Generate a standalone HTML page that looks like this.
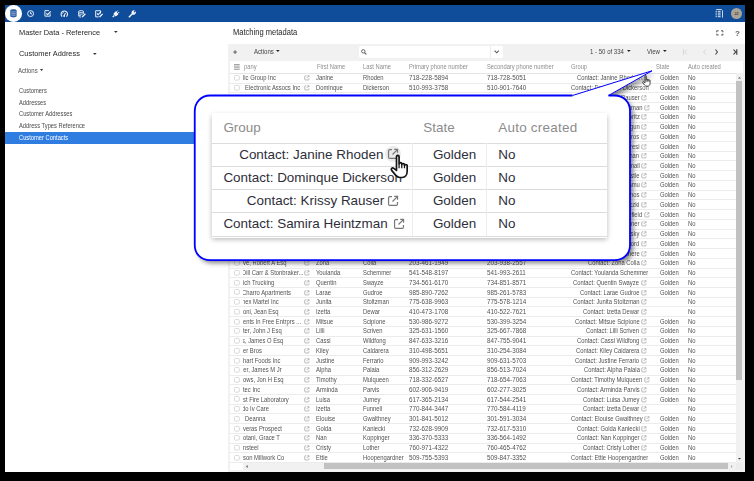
<!DOCTYPE html>
<html><head><meta charset="utf-8"><style>
*{margin:0;padding:0;box-sizing:border-box}
html,body{width:754px;height:481px;overflow:hidden;background:#000}
body{position:relative;font-family:"Liberation Sans",sans-serif;color:#333}
.abs{position:absolute}
.ic{position:absolute;overflow:visible}
.st{position:absolute;white-space:nowrap;line-height:1;transform-origin:0 0}
.clip{position:absolute;overflow:hidden}
.caret{position:absolute;width:0;height:0;border-style:solid;border-color:transparent;border-bottom-width:0}
.hl{position:absolute;left:230px;width:505.8px;height:1px;background:#ececec}
.cb{position:absolute;left:233.9px;width:5.5px;height:5.4px;border:0.8px solid #d9d9d9;border-radius:1.3px;background:#fff}
</style></head><body>
<div class="abs" style="left:5px;top:5px;width:739.8px;height:466.5px;background:#fff"></div>
<div class="abs" style="left:5px;top:5px;width:739.8px;height:16.6px;background:#0f4d9a"></div>
<div class="abs" style="left:5.2px;top:5.2px;width:16.6px;height:16.6px;border-radius:50%;background:#fff"></div>
<svg class="ic" style="left:10.2px;top:9.2px;width:6.9px;height:8.6px" viewBox="0 0 8 10"><path d="M0.3 1.8C0.3 0.6 2 0.2 4 0.2S7.7 0.6 7.7 1.8V8.2C7.7 9.4 6 9.8 4 9.8S0.3 9.4 0.3 8.2Z" fill="#3261a8"/><path d="M1.6 3.2C2.4 3.6 5.6 3.6 6.4 3.2M1.6 5.1C2.4 5.5 5.6 5.5 6.4 5.1M1.6 7C2.4 7.4 5.6 7.4 6.4 7" fill="none" stroke="#c9d6ea" stroke-width="0.7"/></svg>
<svg class="ic" style="left:27px;top:10px;width:7.2px;height:7.2px" viewBox="0 0 10 10"><circle cx="5" cy="5" r="4.1" fill="none" stroke="#f4f7fb" stroke-width="1.35"/><path d="M5 2.7V5.3H7.1" fill="none" stroke="#f4f7fb" stroke-width="1.3"/></svg>
<svg class="ic" style="left:44.1px;top:10.4px;width:7.4px;height:6.8px" viewBox="0 0 10 10"><path d="M8.6 5V9.1H0.9V0.9H6.8" fill="none" stroke="#f4f7fb" stroke-width="1.35"/><path d="M2.9 4.9L4.9 6.9L9.4 2" fill="none" stroke="#f4f7fb" stroke-width="1.5"/></svg>
<svg class="ic" style="left:60.2px;top:10.1px;width:8.6px;height:7.6px" viewBox="0 0 11 10"><path d="M2.6 8.6A4.2 4.2 0 1 1 8.4 8.6" fill="none" stroke="#f4f7fb" stroke-width="1.4"/><path d="M5.3 7.6L7.1 3.8" stroke="#f4f7fb" stroke-width="1.4"/><circle cx="5.3" cy="7.9" r="1.2" fill="#f4f7fb"/><path d="M3 5.2A2.6 2.6 0 0 1 5 2.8" fill="none" stroke="#f4f7fb" stroke-width="0.8"/></svg>
<svg class="ic" style="left:77.9px;top:10px;width:8.1px;height:7.6px" viewBox="0 0 11 10"><ellipse cx="4.2" cy="1.9" rx="3.3" ry="1.3" fill="none" stroke="#f4f7fb" stroke-width="1.1"/><path d="M0.9 1.9V8C0.9 9 2.3 9.5 4.2 9.5M7.5 1.9V4.6M0.9 4.1C0.9 5.1 2.3 5.5 4.2 5.5S7.5 5.1 7.5 4.1M0.9 6.3C0.9 7.2 2.3 7.6 4.2 7.6" fill="none" stroke="#f4f7fb" stroke-width="1.1"/><path d="M5.6 9.3L10 4.9" stroke="#f4f7fb" stroke-width="1.7"/></svg>
<svg class="ic" style="left:94.5px;top:10px;width:8.2px;height:7.6px" viewBox="0 0 11 10"><path d="M7.4 4.6V0.9H0.9V9.1H5" fill="none" stroke="#f4f7fb" stroke-width="1.25"/><path d="M2.5 4.5L4.2 6.2L8.2 1.9" fill="none" stroke="#f4f7fb" stroke-width="1.35"/><path d="M6.1 9.3L10.3 5.1" stroke="#f4f7fb" stroke-width="1.7"/></svg>
<svg class="ic" style="left:111.6px;top:9.8px;width:7.6px;height:7.8px" viewBox="0 0 10 10"><path d="M0.9 9.3L3 7.2" stroke="#f4f7fb" stroke-width="1.7"/><path d="M2 5.6C2 4.6 3 3.3 4 2.4L5.1 1.5L8.6 5L7.7 6.1C6.8 7.1 5.5 8.1 4.5 8.1Z" fill="#f4f7fb"/><path d="M5.8 2.4L7.6 0.6M7.7 4.3L9.5 2.5" stroke="#f4f7fb" stroke-width="1.3"/></svg>
<svg class="ic" style="left:128.3px;top:9.8px;width:8.3px;height:8px" viewBox="0 0 10 10"><path d="M0.9 9.1L5.9 4.1" stroke="#f4f7fb" stroke-width="1.8"/><path d="M4.7 4.7A2.8 2.8 0 0 1 8.4 0.7L6.8 2.3L7.6 3.3L9.3 1.6A2.8 2.8 0 0 1 5.5 5.5Z" fill="#f4f7fb"/></svg>
<svg class="ic" style="left:715.3px;top:8.9px;width:8px;height:9px" viewBox="0 0 8 9"><path d="M1.2 0.5H6.4L7.5 1.6V8.6" fill="none" stroke="#d9e3f1" stroke-width="0.9"/><path d="M0.6 2.3H1.8M2.8 2.3H5.6M0.6 4.1H1.8M2.8 4.1H5.6M0.6 5.9H1.8M2.8 5.9H5.6M0.6 7.7H1.8M2.8 7.7H5.6" stroke="#e6ecf6" stroke-width="1"/></svg>
<div class="abs" style="left:731.2px;top:8.4px;width:10.8px;height:10.8px;border-radius:50%;background:#aaa397"></div>
<div class="st" style="left:734.3px;top:12.1px;font-size:3.9px;color:#3a3a3a;font-weight:bold;letter-spacing:-0.1px">JJ</div>

<div class="st" style="left:18.60px;top:28.70px;font-size:8.05px;color:#262626;transform:scaleX(0.9200);">Master Data - Reference</div>
<svg class="ic" style="left:113.60px;top:31.40px;width:3.70px;height:2.00px" viewBox="0 0 3.70 2.00"><path d="M0 0L3.70 0L1.85 2.00Z" fill="#333"/></svg>
<div class="st" style="left:18.60px;top:49.70px;font-size:8.05px;color:#262626;transform:scaleX(0.9200);">Customer Address</div>
<svg class="ic" style="left:92.60px;top:52.60px;width:3.70px;height:2.00px" viewBox="0 0 3.70 2.00"><path d="M0 0L3.70 0L1.85 2.00Z" fill="#333"/></svg>
<div class="st" style="left:18.00px;top:67.60px;font-size:6.59px;color:#505050;transform:scaleX(0.9100);">Actions</div>
<svg class="ic" style="left:39.80px;top:69.10px;width:3.20px;height:2.00px" viewBox="0 0 3.20 2.00"><path d="M0 0L3.20 0L1.60 2.00Z" fill="#333"/></svg>
<div class="st" style="left:18.50px;top:87.70px;font-size:6.32px;color:#4a4a4a;transform:scaleX(0.9100);">Customers</div>
<div class="st" style="left:18.50px;top:99.50px;font-size:6.32px;color:#4a4a4a;transform:scaleX(0.9100);">Addresses</div>
<div class="st" style="left:18.50px;top:111.20px;font-size:6.32px;color:#4a4a4a;transform:scaleX(0.9100);">Customer Addresses</div>
<div class="st" style="left:18.50px;top:123.00px;font-size:6.32px;color:#4a4a4a;transform:scaleX(0.9100);">Address Types Reference</div>
<div class="abs" style="left:5px;top:132.1px;width:222px;height:11.7px;background:#2f7de1"></div>
<div class="st" style="left:18.50px;top:134.80px;font-size:6.32px;color:#fff;transform:scaleX(0.9100);">Customer Contacts</div>

<div class="st" style="left:233.00px;top:29.00px;font-size:8.21px;color:#262626;transform:scaleX(0.9200);">Matching metadata</div>
<svg class="ic" style="left:716.1px;top:29.9px;width:7.6px;height:5.8px" viewBox="0 0 10 7.6"><path d="M1 2.8V1.6C1 1.2 1.2 1 1.6 1H3.4M6.6 1H8.4C8.8 1 9 1.2 9 1.6V2.8M9 4.8V6C9 6.4 8.8 6.6 8.4 6.6H6.6M3.4 6.6H1.6C1.2 6.6 1 6.4 1 6V4.8" fill="none" stroke="#5a5a5a" stroke-width="1.5"/></svg>
<div class="st" style="left:734.9px;top:29.6px;font-size:7.8px;color:#5a5a5a;font-weight:bold">?</div>

<div class="abs" style="left:228px;top:43.5px;width:516.8px;height:428px;background:#f1f1f1"></div>
<svg class="ic" style="left:233.4px;top:49.8px;width:4.2px;height:4.2px" viewBox="0 0 4.2 4.2"><path d="M2.1 0.2V4M0.2 2.1H4" stroke="#555" stroke-width="0.9"/></svg>
<div class="st" style="left:253.80px;top:48.60px;font-size:6.65px;color:#444;transform:scaleX(0.9100);">Actions</div>
<svg class="ic" style="left:275.90px;top:50.40px;width:3.70px;height:2.10px" viewBox="0 0 3.70 2.10"><path d="M0 0L3.70 0L1.85 2.10Z" fill="#222"/></svg>
<div class="abs" style="left:358.5px;top:45.8px;width:144px;height:12.2px;background:#fff;border-radius:2px"></div>
<div class="abs" style="left:490.4px;top:45.8px;width:0.7px;height:12.2px;background:#ebebeb"></div>
<svg class="ic" style="left:361.4px;top:48.7px;width:5.8px;height:5.8px" viewBox="0 0 10 10"><circle cx="4" cy="4" r="2.9" fill="none" stroke="#555" stroke-width="1.5"/><path d="M6.1 6.1L9.2 9.2" stroke="#555" stroke-width="1.9"/></svg>
<svg class="ic" style="left:493.8px;top:50.2px;width:5.4px;height:3.4px" viewBox="0 0 10 6"><path d="M1 1L5 5L9 1" fill="none" stroke="#555" stroke-width="1.9"/></svg>
<div class="st" style="left:590.30px;top:48.60px;font-size:6.65px;color:#444;transform:scaleX(0.9100);">1 - 50 of 334</div>
<svg class="ic" style="left:626.90px;top:50.00px;width:3.70px;height:2.10px" viewBox="0 0 3.70 2.10"><path d="M0 0L3.70 0L1.85 2.10Z" fill="#222"/></svg>
<div class="st" style="left:647.40px;top:48.60px;font-size:6.65px;color:#444;transform:scaleX(0.9100);">View</div>
<svg class="ic" style="left:662.60px;top:50.00px;width:3.70px;height:2.10px" viewBox="0 0 3.70 2.10"><path d="M0 0L3.70 0L1.85 2.10Z" fill="#222"/></svg>
<svg class="ic" style="left:683.4px;top:48.7px;width:4.4px;height:6px" viewBox="0 0 4.4 6"><path d="M0.5 0.2V5.8M3.9 0.5L1.7 3L3.9 5.5" fill="none" stroke="#cfcfcf" stroke-width="0.8"/></svg>
<svg class="ic" style="left:703.3px;top:48.7px;width:3px;height:6px" viewBox="0 0 3 6"><path d="M2.6 0.5L0.6 3L2.6 5.5" fill="none" stroke="#cfcfcf" stroke-width="0.8"/></svg>
<svg class="ic" style="left:715.3px;top:48.7px;width:3px;height:6px" viewBox="0 0 3 6"><path d="M0.5 0.5L2.4 3L0.5 5.5" fill="none" stroke="#444" stroke-width="1.1"/></svg>
<svg class="ic" style="left:733.3px;top:48.7px;width:4.4px;height:6px" viewBox="0 0 4.4 6"><path d="M3.8 0.2V5.8M0.5 0.5L2.7 3L0.5 5.5" fill="none" stroke="#333" stroke-width="1.1"/></svg>

<div class="abs" style="left:230px;top:60.7px;width:512.6px;height:409.6px;background:#fff"></div>
<div class="abs" style="left:230px;top:72.9px;width:512.6px;height:1px;background:#e4e4e4"></div>
<svg class="ic" style="left:233.7px;top:63.9px;width:5.7px;height:5.8px" viewBox="0 0 6 6"><path d="M0 0.5H6M0 2.2H6M0 3.9H6M0 5.6H6" stroke="#8a8a8a" stroke-width="0.85"/></svg>
<div class="st" style="left:243.90px;top:64.00px;font-size:6.37px;color:#8e8e8e;transform:scaleX(0.9100);">pany</div>
<div class="st" style="left:316.50px;top:64.00px;font-size:6.37px;color:#8e8e8e;transform:scaleX(0.9100);">First Name</div>
<div class="st" style="left:363.30px;top:64.00px;font-size:6.37px;color:#8e8e8e;transform:scaleX(0.9100);">Last Name</div>
<div class="st" style="left:408.90px;top:64.00px;font-size:6.37px;color:#8e8e8e;transform:scaleX(0.9100);">Primary phone number</div>
<div class="st" style="left:486.60px;top:64.00px;font-size:6.37px;color:#8e8e8e;transform:scaleX(0.9100);">Secondary phone number</div>
<div class="st" style="left:571.30px;top:64.00px;font-size:6.37px;color:#8e8e8e;transform:scaleX(0.9100);">Group</div>
<div class="st" style="left:655.60px;top:64.00px;font-size:6.37px;color:#8e8e8e;transform:scaleX(0.9100);">State</div>
<div class="st" style="left:687.60px;top:64.00px;font-size:6.37px;color:#8e8e8e;transform:scaleX(0.9100);">Auto created</div>

<div class="hl" style="top:82.63px"></div>
<svg class="ic" style="left:233.8px;top:75.33px;width:5.8px;height:5.6px" viewBox="0 0 5.8 5.6"><rect x="0.45" y="0.45" width="4.9" height="4.7" rx="1.1" fill="#fff" stroke="#d6d6d6" stroke-width="0.9"/></svg>
<div class="clip" style="left:243px;top:73.43px;width:59.5px;height:9.7px"><div class="st" style="left:0.00px;top:2.00px;font-size:6.43px;color:#525252;transform:scaleX(0.9100);">lic Group Inc</div></div>
<svg class="ic" style="left:304.20px;top:75.43px;width:5.70px;height:5.70px" viewBox="0 0 10 10"><path d="M4.2 1.3H2.3C1.7 1.3 1.3 1.7 1.3 2.3V7.7C1.3 8.3 1.7 8.7 2.3 8.7H7.7C8.3 8.7 8.7 8.3 8.7 7.7V5.8" fill="none" stroke="#999" stroke-width="1.2"/><path d="M4.6 5.4L8.4 1.6M6 1.2H8.8V4" fill="none" stroke="#999" stroke-width="1.2"/></svg>
<div class="st" style="left:316.00px;top:75.43px;font-size:6.43px;color:#525252;transform:scaleX(0.9100);">Janine</div>
<div class="st" style="left:363.00px;top:75.43px;font-size:6.43px;color:#525252;transform:scaleX(0.9100);">Rhoden</div>
<div class="st" style="left:408.80px;top:75.43px;font-size:6.92px;color:#525252;transform:scaleX(0.9100);">718-228-5894</div>
<div class="st" style="left:486.70px;top:75.43px;font-size:6.92px;color:#525252;transform:scaleX(0.9100);">718-728-5051</div>
<div class="clip" style="left:571.3px;top:73.43px;width:79.2px;height:9.7px"><div class="st" style="left:5.40px;top:2.00px;font-size:6.43px;color:#525252;transform:scaleX(0.9100);">Contact: Janine Rhoden</div><svg class="ic" style="left:69.30px;top:2.00px;width:5.70px;height:5.70px" viewBox="0 0 10 10"><path d="M4.2 1.3H2.3C1.7 1.3 1.3 1.7 1.3 2.3V7.7C1.3 8.3 1.7 8.7 2.3 8.7H7.7C8.3 8.7 8.7 8.3 8.7 7.7V5.8" fill="none" stroke="#999" stroke-width="1.2"/><path d="M4.6 5.4L8.4 1.6M6 1.2H8.8V4" fill="none" stroke="#999" stroke-width="1.2"/></svg></div>
<div class="st" style="left:659.90px;top:75.43px;font-size:6.43px;color:#525252;transform:scaleX(0.9100);">Golden</div>
<div class="st" style="left:687.80px;top:75.43px;font-size:6.43px;color:#525252;transform:scaleX(0.9100);">No</div>
<div class="hl" style="top:92.36px"></div>
<svg class="ic" style="left:233.8px;top:85.06px;width:5.8px;height:5.6px" viewBox="0 0 5.8 5.6"><rect x="0.45" y="0.45" width="4.9" height="4.7" rx="1.1" fill="#fff" stroke="#d6d6d6" stroke-width="0.9"/></svg>
<div class="clip" style="left:243px;top:83.16px;width:59.5px;height:9.7px"><div class="st" style="left:1.90px;top:2.00px;font-size:6.43px;color:#525252;transform:scaleX(0.9100);">Electronic Assocs Inc</div></div>
<svg class="ic" style="left:304.20px;top:85.16px;width:5.70px;height:5.70px" viewBox="0 0 10 10"><path d="M4.2 1.3H2.3C1.7 1.3 1.3 1.7 1.3 2.3V7.7C1.3 8.3 1.7 8.7 2.3 8.7H7.7C8.3 8.7 8.7 8.3 8.7 7.7V5.8" fill="none" stroke="#999" stroke-width="1.2"/><path d="M4.6 5.4L8.4 1.6M6 1.2H8.8V4" fill="none" stroke="#999" stroke-width="1.2"/></svg>
<div class="st" style="left:316.00px;top:85.16px;font-size:6.43px;color:#525252;transform:scaleX(0.9100);">Dominque</div>
<div class="st" style="left:363.00px;top:85.16px;font-size:6.43px;color:#525252;transform:scaleX(0.9100);">Dickerson</div>
<div class="st" style="left:408.80px;top:85.16px;font-size:6.92px;color:#525252;transform:scaleX(0.9100);">510-993-3758</div>
<div class="st" style="left:486.70px;top:85.16px;font-size:6.92px;color:#525252;transform:scaleX(0.9100);">510-901-7640</div>
<div class="clip" style="left:571.3px;top:83.16px;width:79.2px;height:9.7px"><div class="st" style="left:0.00px;top:2.00px;font-size:6.43px;color:#525252;transform:scaleX(0.9100);">Contact: Dominque Dickerson</div><svg class="ic" style="left:78.83px;top:2.00px;width:5.70px;height:5.70px" viewBox="0 0 10 10"><path d="M4.2 1.3H2.3C1.7 1.3 1.3 1.7 1.3 2.3V7.7C1.3 8.3 1.7 8.7 2.3 8.7H7.7C8.3 8.7 8.7 8.3 8.7 7.7V5.8" fill="none" stroke="#999" stroke-width="1.2"/><path d="M4.6 5.4L8.4 1.6M6 1.2H8.8V4" fill="none" stroke="#999" stroke-width="1.2"/></svg></div>
<div class="st" style="left:659.90px;top:85.16px;font-size:6.43px;color:#525252;transform:scaleX(0.9100);">Golden</div>
<div class="st" style="left:687.80px;top:85.16px;font-size:6.43px;color:#525252;transform:scaleX(0.9100);">No</div>
<div class="hl" style="top:102.09px"></div>
<svg class="ic" style="left:233.8px;top:94.79px;width:5.8px;height:5.6px" viewBox="0 0 5.8 5.6"><rect x="0.45" y="0.45" width="4.9" height="4.7" rx="1.1" fill="#fff" stroke="#d6d6d6" stroke-width="0.9"/></svg>
<div class="clip" style="left:243px;top:92.89px;width:59.5px;height:9.7px"><div class="st" style="left:0.00px;top:2.00px;font-size:6.43px;color:#525252;transform:scaleX(0.9100);">Feltz Printing Service</div></div>
<svg class="ic" style="left:304.20px;top:94.89px;width:5.70px;height:5.70px" viewBox="0 0 10 10"><path d="M4.2 1.3H2.3C1.7 1.3 1.3 1.7 1.3 2.3V7.7C1.3 8.3 1.7 8.7 2.3 8.7H7.7C8.3 8.7 8.7 8.3 8.7 7.7V5.8" fill="none" stroke="#999" stroke-width="1.2"/><path d="M4.6 5.4L8.4 1.6M6 1.2H8.8V4" fill="none" stroke="#999" stroke-width="1.2"/></svg>
<div class="st" style="left:316.00px;top:94.89px;font-size:6.43px;color:#525252;transform:scaleX(0.9100);">Krissy</div>
<div class="st" style="left:363.00px;top:94.89px;font-size:6.43px;color:#525252;transform:scaleX(0.9100);">Rauser</div>
<div class="st" style="left:408.80px;top:94.89px;font-size:6.92px;color:#525252;transform:scaleX(0.9100);">555-111-2222</div>
<div class="st" style="left:486.70px;top:94.89px;font-size:6.92px;color:#525252;transform:scaleX(0.9100);">555-333-4444</div>
<div class="clip" style="left:571.3px;top:92.89px;width:79.2px;height:9.7px"><div class="st" style="left:8.34px;top:2.00px;font-size:6.43px;color:#525252;transform:scaleX(0.9100);">Contact: Krissy Rauser</div><svg class="ic" style="left:69.30px;top:2.00px;width:5.70px;height:5.70px" viewBox="0 0 10 10"><path d="M4.2 1.3H2.3C1.7 1.3 1.3 1.7 1.3 2.3V7.7C1.3 8.3 1.7 8.7 2.3 8.7H7.7C8.3 8.7 8.7 8.3 8.7 7.7V5.8" fill="none" stroke="#999" stroke-width="1.2"/><path d="M4.6 5.4L8.4 1.6M6 1.2H8.8V4" fill="none" stroke="#999" stroke-width="1.2"/></svg></div>
<div class="st" style="left:659.90px;top:94.89px;font-size:6.43px;color:#525252;transform:scaleX(0.9100);">Golden</div>
<div class="st" style="left:687.80px;top:94.89px;font-size:6.43px;color:#525252;transform:scaleX(0.9100);">No</div>
<div class="hl" style="top:111.82px"></div>
<svg class="ic" style="left:233.8px;top:104.52px;width:5.8px;height:5.6px" viewBox="0 0 5.8 5.6"><rect x="0.45" y="0.45" width="4.9" height="4.7" rx="1.1" fill="#fff" stroke="#d6d6d6" stroke-width="0.9"/></svg>
<div class="clip" style="left:243px;top:102.62px;width:59.5px;height:9.7px"><div class="st" style="left:0.00px;top:2.00px;font-size:6.43px;color:#525252;transform:scaleX(0.9100);">Morlong Associates</div></div>
<svg class="ic" style="left:304.20px;top:104.62px;width:5.70px;height:5.70px" viewBox="0 0 10 10"><path d="M4.2 1.3H2.3C1.7 1.3 1.3 1.7 1.3 2.3V7.7C1.3 8.3 1.7 8.7 2.3 8.7H7.7C8.3 8.7 8.7 8.3 8.7 7.7V5.8" fill="none" stroke="#999" stroke-width="1.2"/><path d="M4.6 5.4L8.4 1.6M6 1.2H8.8V4" fill="none" stroke="#999" stroke-width="1.2"/></svg>
<div class="st" style="left:316.00px;top:104.62px;font-size:6.43px;color:#525252;transform:scaleX(0.9100);">Samira</div>
<div class="st" style="left:363.00px;top:104.62px;font-size:6.43px;color:#525252;transform:scaleX(0.9100);">Heintzman</div>
<div class="st" style="left:408.80px;top:104.62px;font-size:6.92px;color:#525252;transform:scaleX(0.9100);">555-111-2222</div>
<div class="st" style="left:486.70px;top:104.62px;font-size:6.92px;color:#525252;transform:scaleX(0.9100);">555-333-4444</div>
<div class="clip" style="left:571.3px;top:102.62px;width:79.2px;height:9.7px"><div class="st" style="left:0.00px;top:2.00px;font-size:6.43px;color:#525252;transform:scaleX(0.9100);">Contact: Samira Heintzman</div><svg class="ic" style="left:72.66px;top:2.00px;width:5.70px;height:5.70px" viewBox="0 0 10 10"><path d="M4.2 1.3H2.3C1.7 1.3 1.3 1.7 1.3 2.3V7.7C1.3 8.3 1.7 8.7 2.3 8.7H7.7C8.3 8.7 8.7 8.3 8.7 7.7V5.8" fill="none" stroke="#999" stroke-width="1.2"/><path d="M4.6 5.4L8.4 1.6M6 1.2H8.8V4" fill="none" stroke="#999" stroke-width="1.2"/></svg></div>
<div class="st" style="left:659.90px;top:104.62px;font-size:6.43px;color:#525252;transform:scaleX(0.9100);">Golden</div>
<div class="st" style="left:687.80px;top:104.62px;font-size:6.43px;color:#525252;transform:scaleX(0.9100);">No</div>
<div class="hl" style="top:121.56px"></div>
<svg class="ic" style="left:233.8px;top:114.26px;width:5.8px;height:5.6px" viewBox="0 0 5.8 5.6"><rect x="0.45" y="0.45" width="4.9" height="4.7" rx="1.1" fill="#fff" stroke="#d6d6d6" stroke-width="0.9"/></svg>
<div class="clip" style="left:243px;top:112.36px;width:59.5px;height:9.7px"><div class="st" style="left:0.00px;top:2.00px;font-size:6.43px;color:#525252;transform:scaleX(0.9100);">Commercial Press</div></div>
<svg class="ic" style="left:304.20px;top:114.36px;width:5.70px;height:5.70px" viewBox="0 0 10 10"><path d="M4.2 1.3H2.3C1.7 1.3 1.3 1.7 1.3 2.3V7.7C1.3 8.3 1.7 8.7 2.3 8.7H7.7C8.3 8.7 8.7 8.3 8.7 7.7V5.8" fill="none" stroke="#999" stroke-width="1.2"/><path d="M4.6 5.4L8.4 1.6M6 1.2H8.8V4" fill="none" stroke="#999" stroke-width="1.2"/></svg>
<div class="st" style="left:316.00px;top:114.36px;font-size:6.43px;color:#525252;transform:scaleX(0.9100);">Lorrie</div>
<div class="st" style="left:363.00px;top:114.36px;font-size:6.43px;color:#525252;transform:scaleX(0.9100);">Moritz</div>
<div class="st" style="left:408.80px;top:114.36px;font-size:6.92px;color:#525252;transform:scaleX(0.9100);">555-111-2222</div>
<div class="st" style="left:486.70px;top:114.36px;font-size:6.92px;color:#525252;transform:scaleX(0.9100);">555-333-4444</div>
<div class="clip" style="left:571.3px;top:112.36px;width:79.2px;height:9.7px"><div class="st" style="left:12.23px;top:2.00px;font-size:6.43px;color:#525252;transform:scaleX(0.9100);">Contact: Lorrie Moritz</div><svg class="ic" style="left:69.30px;top:2.00px;width:5.70px;height:5.70px" viewBox="0 0 10 10"><path d="M4.2 1.3H2.3C1.7 1.3 1.3 1.7 1.3 2.3V7.7C1.3 8.3 1.7 8.7 2.3 8.7H7.7C8.3 8.7 8.7 8.3 8.7 7.7V5.8" fill="none" stroke="#999" stroke-width="1.2"/><path d="M4.6 5.4L8.4 1.6M6 1.2H8.8V4" fill="none" stroke="#999" stroke-width="1.2"/></svg></div>
<div class="st" style="left:659.90px;top:114.36px;font-size:6.43px;color:#525252;transform:scaleX(0.9100);">Golden</div>
<div class="st" style="left:687.80px;top:114.36px;font-size:6.43px;color:#525252;transform:scaleX(0.9100);">No</div>
<div class="hl" style="top:131.29px"></div>
<svg class="ic" style="left:233.8px;top:123.99px;width:5.8px;height:5.6px" viewBox="0 0 5.8 5.6"><rect x="0.45" y="0.45" width="4.9" height="4.7" rx="1.1" fill="#fff" stroke="#d6d6d6" stroke-width="0.9"/></svg>
<div class="clip" style="left:243px;top:122.09px;width:59.5px;height:9.7px"><div class="st" style="left:0.00px;top:2.00px;font-size:6.43px;color:#525252;transform:scaleX(0.9100);">Truhlar And Truhlar</div></div>
<svg class="ic" style="left:304.20px;top:124.09px;width:5.70px;height:5.70px" viewBox="0 0 10 10"><path d="M4.2 1.3H2.3C1.7 1.3 1.3 1.7 1.3 2.3V7.7C1.3 8.3 1.7 8.7 2.3 8.7H7.7C8.3 8.7 8.7 8.3 8.7 7.7V5.8" fill="none" stroke="#999" stroke-width="1.2"/><path d="M4.6 5.4L8.4 1.6M6 1.2H8.8V4" fill="none" stroke="#999" stroke-width="1.2"/></svg>
<div class="st" style="left:316.00px;top:124.09px;font-size:6.43px;color:#525252;transform:scaleX(0.9100);">Mattie</div>
<div class="st" style="left:363.00px;top:124.09px;font-size:6.43px;color:#525252;transform:scaleX(0.9100);">Bogun</div>
<div class="st" style="left:408.80px;top:124.09px;font-size:6.92px;color:#525252;transform:scaleX(0.9100);">555-111-2222</div>
<div class="st" style="left:486.70px;top:124.09px;font-size:6.92px;color:#525252;transform:scaleX(0.9100);">555-333-4444</div>
<div class="clip" style="left:571.3px;top:122.09px;width:79.2px;height:9.7px"><div class="st" style="left:10.27px;top:2.00px;font-size:6.43px;color:#525252;transform:scaleX(0.9100);">Contact: Mattie Bogun</div><svg class="ic" style="left:69.30px;top:2.00px;width:5.70px;height:5.70px" viewBox="0 0 10 10"><path d="M4.2 1.3H2.3C1.7 1.3 1.3 1.7 1.3 2.3V7.7C1.3 8.3 1.7 8.7 2.3 8.7H7.7C8.3 8.7 8.7 8.3 8.7 7.7V5.8" fill="none" stroke="#999" stroke-width="1.2"/><path d="M4.6 5.4L8.4 1.6M6 1.2H8.8V4" fill="none" stroke="#999" stroke-width="1.2"/></svg></div>
<div class="st" style="left:659.90px;top:124.09px;font-size:6.43px;color:#525252;transform:scaleX(0.9100);">Golden</div>
<div class="st" style="left:687.80px;top:124.09px;font-size:6.43px;color:#525252;transform:scaleX(0.9100);">No</div>
<div class="hl" style="top:141.02px"></div>
<svg class="ic" style="left:233.8px;top:133.72px;width:5.8px;height:5.6px" viewBox="0 0 5.8 5.6"><rect x="0.45" y="0.45" width="4.9" height="4.7" rx="1.1" fill="#fff" stroke="#d6d6d6" stroke-width="0.9"/></svg>
<div class="clip" style="left:243px;top:131.82px;width:59.5px;height:9.7px"><div class="st" style="left:0.00px;top:2.00px;font-size:6.43px;color:#525252;transform:scaleX(0.9100);">Chapman Ross</div></div>
<svg class="ic" style="left:304.20px;top:133.82px;width:5.70px;height:5.70px" viewBox="0 0 10 10"><path d="M4.2 1.3H2.3C1.7 1.3 1.3 1.7 1.3 2.3V7.7C1.3 8.3 1.7 8.7 2.3 8.7H7.7C8.3 8.7 8.7 8.3 8.7 7.7V5.8" fill="none" stroke="#999" stroke-width="1.2"/><path d="M4.6 5.4L8.4 1.6M6 1.2H8.8V4" fill="none" stroke="#999" stroke-width="1.2"/></svg>
<div class="st" style="left:316.00px;top:133.82px;font-size:6.43px;color:#525252;transform:scaleX(0.9100);">Gladys</div>
<div class="st" style="left:363.00px;top:133.82px;font-size:6.43px;color:#525252;transform:scaleX(0.9100);">Petros</div>
<div class="st" style="left:408.80px;top:133.82px;font-size:6.92px;color:#525252;transform:scaleX(0.9100);">555-111-2222</div>
<div class="st" style="left:486.70px;top:133.82px;font-size:6.92px;color:#525252;transform:scaleX(0.9100);">555-333-4444</div>
<div class="clip" style="left:571.3px;top:131.82px;width:79.2px;height:9.7px"><div class="st" style="left:8.00px;top:2.00px;font-size:6.43px;color:#525252;transform:scaleX(0.9100);">Contact: Gladys Petros</div><svg class="ic" style="left:69.30px;top:2.00px;width:5.70px;height:5.70px" viewBox="0 0 10 10"><path d="M4.2 1.3H2.3C1.7 1.3 1.3 1.7 1.3 2.3V7.7C1.3 8.3 1.7 8.7 2.3 8.7H7.7C8.3 8.7 8.7 8.3 8.7 7.7V5.8" fill="none" stroke="#999" stroke-width="1.2"/><path d="M4.6 5.4L8.4 1.6M6 1.2H8.8V4" fill="none" stroke="#999" stroke-width="1.2"/></svg></div>
<div class="st" style="left:659.90px;top:133.82px;font-size:6.43px;color:#525252;transform:scaleX(0.9100);">Golden</div>
<div class="st" style="left:687.80px;top:133.82px;font-size:6.43px;color:#525252;transform:scaleX(0.9100);">No</div>
<div class="hl" style="top:150.75px"></div>
<svg class="ic" style="left:233.8px;top:143.45px;width:5.8px;height:5.6px" viewBox="0 0 5.8 5.6"><rect x="0.45" y="0.45" width="4.9" height="4.7" rx="1.1" fill="#fff" stroke="#d6d6d6" stroke-width="0.9"/></svg>
<div class="clip" style="left:243px;top:141.55px;width:59.5px;height:9.7px"><div class="st" style="left:0.00px;top:2.00px;font-size:6.43px;color:#525252;transform:scaleX(0.9100);">Printing Dimensions</div></div>
<svg class="ic" style="left:304.20px;top:143.55px;width:5.70px;height:5.70px" viewBox="0 0 10 10"><path d="M4.2 1.3H2.3C1.7 1.3 1.3 1.7 1.3 2.3V7.7C1.3 8.3 1.7 8.7 2.3 8.7H7.7C8.3 8.7 8.7 8.3 8.7 7.7V5.8" fill="none" stroke="#999" stroke-width="1.2"/><path d="M4.6 5.4L8.4 1.6M6 1.2H8.8V4" fill="none" stroke="#999" stroke-width="1.2"/></svg>
<div class="st" style="left:316.00px;top:143.55px;font-size:6.43px;color:#525252;transform:scaleX(0.9100);">Yuki</div>
<div class="st" style="left:363.00px;top:143.55px;font-size:6.43px;color:#525252;transform:scaleX(0.9100);">Teresi</div>
<div class="st" style="left:408.80px;top:143.55px;font-size:6.92px;color:#525252;transform:scaleX(0.9100);">555-111-2222</div>
<div class="st" style="left:486.70px;top:143.55px;font-size:6.92px;color:#525252;transform:scaleX(0.9100);">555-333-4444</div>
<div class="clip" style="left:571.3px;top:141.55px;width:79.2px;height:9.7px"><div class="st" style="left:16.66px;top:2.00px;font-size:6.43px;color:#525252;transform:scaleX(0.9100);">Contact: Yuki Teresi</div><svg class="ic" style="left:69.30px;top:2.00px;width:5.70px;height:5.70px" viewBox="0 0 10 10"><path d="M4.2 1.3H2.3C1.7 1.3 1.3 1.7 1.3 2.3V7.7C1.3 8.3 1.7 8.7 2.3 8.7H7.7C8.3 8.7 8.7 8.3 8.7 7.7V5.8" fill="none" stroke="#999" stroke-width="1.2"/><path d="M4.6 5.4L8.4 1.6M6 1.2H8.8V4" fill="none" stroke="#999" stroke-width="1.2"/></svg></div>
<div class="st" style="left:659.90px;top:143.55px;font-size:6.43px;color:#525252;transform:scaleX(0.9100);">Golden</div>
<div class="st" style="left:687.80px;top:143.55px;font-size:6.43px;color:#525252;transform:scaleX(0.9100);">No</div>
<div class="hl" style="top:160.48px"></div>
<svg class="ic" style="left:233.8px;top:153.18px;width:5.8px;height:5.6px" viewBox="0 0 5.8 5.6"><rect x="0.45" y="0.45" width="4.9" height="4.7" rx="1.1" fill="#fff" stroke="#d6d6d6" stroke-width="0.9"/></svg>
<div class="clip" style="left:243px;top:151.28px;width:59.5px;height:9.7px"><div class="st" style="left:0.00px;top:2.00px;font-size:6.43px;color:#525252;transform:scaleX(0.9100);">Ruta Consulting</div></div>
<svg class="ic" style="left:304.20px;top:153.28px;width:5.70px;height:5.70px" viewBox="0 0 10 10"><path d="M4.2 1.3H2.3C1.7 1.3 1.3 1.7 1.3 2.3V7.7C1.3 8.3 1.7 8.7 2.3 8.7H7.7C8.3 8.7 8.7 8.3 8.7 7.7V5.8" fill="none" stroke="#999" stroke-width="1.2"/><path d="M4.6 5.4L8.4 1.6M6 1.2H8.8V4" fill="none" stroke="#999" stroke-width="1.2"/></svg>
<div class="st" style="left:316.00px;top:153.28px;font-size:6.43px;color:#525252;transform:scaleX(0.9100);">Chau</div>
<div class="st" style="left:363.00px;top:153.28px;font-size:6.43px;color:#525252;transform:scaleX(0.9100);">Kitzman</div>
<div class="st" style="left:408.80px;top:153.28px;font-size:6.92px;color:#525252;transform:scaleX(0.9100);">555-111-2222</div>
<div class="st" style="left:486.70px;top:153.28px;font-size:6.92px;color:#525252;transform:scaleX(0.9100);">555-333-4444</div>
<div class="clip" style="left:571.3px;top:151.28px;width:79.2px;height:9.7px"><div class="st" style="left:8.00px;top:2.00px;font-size:6.43px;color:#525252;transform:scaleX(0.9100);">Contact: Chau Kitzman</div><svg class="ic" style="left:69.30px;top:2.00px;width:5.70px;height:5.70px" viewBox="0 0 10 10"><path d="M4.2 1.3H2.3C1.7 1.3 1.3 1.7 1.3 2.3V7.7C1.3 8.3 1.7 8.7 2.3 8.7H7.7C8.3 8.7 8.7 8.3 8.7 7.7V5.8" fill="none" stroke="#999" stroke-width="1.2"/><path d="M4.6 5.4L8.4 1.6M6 1.2H8.8V4" fill="none" stroke="#999" stroke-width="1.2"/></svg></div>
<div class="st" style="left:659.90px;top:153.28px;font-size:6.43px;color:#525252;transform:scaleX(0.9100);">Golden</div>
<div class="st" style="left:687.80px;top:153.28px;font-size:6.43px;color:#525252;transform:scaleX(0.9100);">No</div>
<div class="hl" style="top:170.21px"></div>
<svg class="ic" style="left:233.8px;top:162.91px;width:5.8px;height:5.6px" viewBox="0 0 5.8 5.6"><rect x="0.45" y="0.45" width="4.9" height="4.7" rx="1.1" fill="#fff" stroke="#d6d6d6" stroke-width="0.9"/></svg>
<div class="clip" style="left:243px;top:161.01px;width:59.5px;height:9.7px"><div class="st" style="left:0.00px;top:2.00px;font-size:6.43px;color:#525252;transform:scaleX(0.9100);">Wild Flowers</div></div>
<svg class="ic" style="left:304.20px;top:163.01px;width:5.70px;height:5.70px" viewBox="0 0 10 10"><path d="M4.2 1.3H2.3C1.7 1.3 1.3 1.7 1.3 2.3V7.7C1.3 8.3 1.7 8.7 2.3 8.7H7.7C8.3 8.7 8.7 8.3 8.7 7.7V5.8" fill="none" stroke="#999" stroke-width="1.2"/><path d="M4.6 5.4L8.4 1.6M6 1.2H8.8V4" fill="none" stroke="#999" stroke-width="1.2"/></svg>
<div class="st" style="left:316.00px;top:163.01px;font-size:6.43px;color:#525252;transform:scaleX(0.9100);">Carmelina</div>
<div class="st" style="left:363.00px;top:163.01px;font-size:6.43px;color:#525252;transform:scaleX(0.9100);">Bonall</div>
<div class="st" style="left:408.80px;top:163.01px;font-size:6.92px;color:#525252;transform:scaleX(0.9100);">555-111-2222</div>
<div class="st" style="left:486.70px;top:163.01px;font-size:6.92px;color:#525252;transform:scaleX(0.9100);">555-333-4444</div>
<div class="clip" style="left:571.3px;top:161.01px;width:79.2px;height:9.7px"><div class="st" style="left:0.21px;top:2.00px;font-size:6.43px;color:#525252;transform:scaleX(0.9100);">Contact: Carmelina Bonall</div><svg class="ic" style="left:69.30px;top:2.00px;width:5.70px;height:5.70px" viewBox="0 0 10 10"><path d="M4.2 1.3H2.3C1.7 1.3 1.3 1.7 1.3 2.3V7.7C1.3 8.3 1.7 8.7 2.3 8.7H7.7C8.3 8.7 8.7 8.3 8.7 7.7V5.8" fill="none" stroke="#999" stroke-width="1.2"/><path d="M4.6 5.4L8.4 1.6M6 1.2H8.8V4" fill="none" stroke="#999" stroke-width="1.2"/></svg></div>
<div class="st" style="left:659.90px;top:163.01px;font-size:6.43px;color:#525252;transform:scaleX(0.9100);">Golden</div>
<div class="st" style="left:687.80px;top:163.01px;font-size:6.43px;color:#525252;transform:scaleX(0.9100);">No</div>
<div class="hl" style="top:179.94px"></div>
<svg class="ic" style="left:233.8px;top:172.64px;width:5.8px;height:5.6px" viewBox="0 0 5.8 5.6"><rect x="0.45" y="0.45" width="4.9" height="4.7" rx="1.1" fill="#fff" stroke="#d6d6d6" stroke-width="0.9"/></svg>
<div class="clip" style="left:243px;top:170.74px;width:59.5px;height:9.7px"><div class="st" style="left:0.00px;top:2.00px;font-size:6.43px;color:#525252;transform:scaleX(0.9100);">Cedar Ridge</div></div>
<svg class="ic" style="left:304.20px;top:172.74px;width:5.70px;height:5.70px" viewBox="0 0 10 10"><path d="M4.2 1.3H2.3C1.7 1.3 1.3 1.7 1.3 2.3V7.7C1.3 8.3 1.7 8.7 2.3 8.7H7.7C8.3 8.7 8.7 8.3 8.7 7.7V5.8" fill="none" stroke="#999" stroke-width="1.2"/><path d="M4.6 5.4L8.4 1.6M6 1.2H8.8V4" fill="none" stroke="#999" stroke-width="1.2"/></svg>
<div class="st" style="left:316.00px;top:172.74px;font-size:6.43px;color:#525252;transform:scaleX(0.9100);">Lorrie</div>
<div class="st" style="left:363.00px;top:172.74px;font-size:6.43px;color:#525252;transform:scaleX(0.9100);">Nestle</div>
<div class="st" style="left:408.80px;top:172.74px;font-size:6.92px;color:#525252;transform:scaleX(0.9100);">555-111-2222</div>
<div class="st" style="left:486.70px;top:172.74px;font-size:6.92px;color:#525252;transform:scaleX(0.9100);">555-333-4444</div>
<div class="clip" style="left:571.3px;top:170.74px;width:79.2px;height:9.7px"><div class="st" style="left:11.58px;top:2.00px;font-size:6.43px;color:#525252;transform:scaleX(0.9100);">Contact: Lorrie Nestle</div><svg class="ic" style="left:69.30px;top:2.00px;width:5.70px;height:5.70px" viewBox="0 0 10 10"><path d="M4.2 1.3H2.3C1.7 1.3 1.3 1.7 1.3 2.3V7.7C1.3 8.3 1.7 8.7 2.3 8.7H7.7C8.3 8.7 8.7 8.3 8.7 7.7V5.8" fill="none" stroke="#999" stroke-width="1.2"/><path d="M4.6 5.4L8.4 1.6M6 1.2H8.8V4" fill="none" stroke="#999" stroke-width="1.2"/></svg></div>
<div class="st" style="left:659.90px;top:172.74px;font-size:6.43px;color:#525252;transform:scaleX(0.9100);">Golden</div>
<div class="st" style="left:687.80px;top:172.74px;font-size:6.43px;color:#525252;transform:scaleX(0.9100);">No</div>
<div class="hl" style="top:189.67px"></div>
<svg class="ic" style="left:233.8px;top:182.37px;width:5.8px;height:5.6px" viewBox="0 0 5.8 5.6"><rect x="0.45" y="0.45" width="4.9" height="4.7" rx="1.1" fill="#fff" stroke="#d6d6d6" stroke-width="0.9"/></svg>
<div class="clip" style="left:243px;top:180.47px;width:59.5px;height:9.7px"><div class="st" style="left:0.00px;top:2.00px;font-size:6.43px;color:#525252;transform:scaleX(0.9100);">Lake Park</div></div>
<svg class="ic" style="left:304.20px;top:182.47px;width:5.70px;height:5.70px" viewBox="0 0 10 10"><path d="M4.2 1.3H2.3C1.7 1.3 1.3 1.7 1.3 2.3V7.7C1.3 8.3 1.7 8.7 2.3 8.7H7.7C8.3 8.7 8.7 8.3 8.7 7.7V5.8" fill="none" stroke="#999" stroke-width="1.2"/><path d="M4.6 5.4L8.4 1.6M6 1.2H8.8V4" fill="none" stroke="#999" stroke-width="1.2"/></svg>
<div class="st" style="left:316.00px;top:182.47px;font-size:6.43px;color:#525252;transform:scaleX(0.9100);">Estrella</div>
<div class="st" style="left:363.00px;top:182.47px;font-size:6.43px;color:#525252;transform:scaleX(0.9100);">Samu</div>
<div class="st" style="left:408.80px;top:182.47px;font-size:6.92px;color:#525252;transform:scaleX(0.9100);">555-111-2222</div>
<div class="st" style="left:486.70px;top:182.47px;font-size:6.92px;color:#525252;transform:scaleX(0.9100);">555-333-4444</div>
<div class="clip" style="left:571.3px;top:180.47px;width:79.2px;height:9.7px"><div class="st" style="left:8.32px;top:2.00px;font-size:6.43px;color:#525252;transform:scaleX(0.9100);">Contact: Estrella Samu</div><svg class="ic" style="left:69.30px;top:2.00px;width:5.70px;height:5.70px" viewBox="0 0 10 10"><path d="M4.2 1.3H2.3C1.7 1.3 1.3 1.7 1.3 2.3V7.7C1.3 8.3 1.7 8.7 2.3 8.7H7.7C8.3 8.7 8.7 8.3 8.7 7.7V5.8" fill="none" stroke="#999" stroke-width="1.2"/><path d="M4.6 5.4L8.4 1.6M6 1.2H8.8V4" fill="none" stroke="#999" stroke-width="1.2"/></svg></div>
<div class="st" style="left:659.90px;top:182.47px;font-size:6.43px;color:#525252;transform:scaleX(0.9100);">Golden</div>
<div class="st" style="left:687.80px;top:182.47px;font-size:6.43px;color:#525252;transform:scaleX(0.9100);">No</div>
<div class="hl" style="top:199.40px"></div>
<svg class="ic" style="left:233.8px;top:192.10px;width:5.8px;height:5.6px" viewBox="0 0 5.8 5.6"><rect x="0.45" y="0.45" width="4.9" height="4.7" rx="1.1" fill="#fff" stroke="#d6d6d6" stroke-width="0.9"/></svg>
<div class="clip" style="left:243px;top:190.20px;width:59.5px;height:9.7px"><div class="st" style="left:0.00px;top:2.00px;font-size:6.43px;color:#525252;transform:scaleX(0.9100);">Acme Inc</div></div>
<svg class="ic" style="left:304.20px;top:192.20px;width:5.70px;height:5.70px" viewBox="0 0 10 10"><path d="M4.2 1.3H2.3C1.7 1.3 1.3 1.7 1.3 2.3V7.7C1.3 8.3 1.7 8.7 2.3 8.7H7.7C8.3 8.7 8.7 8.3 8.7 7.7V5.8" fill="none" stroke="#999" stroke-width="1.2"/><path d="M4.6 5.4L8.4 1.6M6 1.2H8.8V4" fill="none" stroke="#999" stroke-width="1.2"/></svg>
<div class="st" style="left:316.00px;top:192.20px;font-size:6.43px;color:#525252;transform:scaleX(0.9100);">Ryan</div>
<div class="st" style="left:363.00px;top:192.20px;font-size:6.43px;color:#525252;transform:scaleX(0.9100);">Harnos</div>
<div class="st" style="left:408.80px;top:192.20px;font-size:6.92px;color:#525252;transform:scaleX(0.9100);">555-111-2222</div>
<div class="st" style="left:486.70px;top:192.20px;font-size:6.92px;color:#525252;transform:scaleX(0.9100);">555-333-4444</div>
<div class="clip" style="left:571.3px;top:190.20px;width:79.2px;height:9.7px"><div class="st" style="left:10.60px;top:2.00px;font-size:6.43px;color:#525252;transform:scaleX(0.9100);">Contact: Ryan Harnos</div><svg class="ic" style="left:69.30px;top:2.00px;width:5.70px;height:5.70px" viewBox="0 0 10 10"><path d="M4.2 1.3H2.3C1.7 1.3 1.3 1.7 1.3 2.3V7.7C1.3 8.3 1.7 8.7 2.3 8.7H7.7C8.3 8.7 8.7 8.3 8.7 7.7V5.8" fill="none" stroke="#999" stroke-width="1.2"/><path d="M4.6 5.4L8.4 1.6M6 1.2H8.8V4" fill="none" stroke="#999" stroke-width="1.2"/></svg></div>
<div class="st" style="left:659.90px;top:192.20px;font-size:6.43px;color:#525252;transform:scaleX(0.9100);">Golden</div>
<div class="st" style="left:687.80px;top:192.20px;font-size:6.43px;color:#525252;transform:scaleX(0.9100);">No</div>
<div class="hl" style="top:209.13px"></div>
<svg class="ic" style="left:233.8px;top:201.83px;width:5.8px;height:5.6px" viewBox="0 0 5.8 5.6"><rect x="0.45" y="0.45" width="4.9" height="4.7" rx="1.1" fill="#fff" stroke="#d6d6d6" stroke-width="0.9"/></svg>
<div class="clip" style="left:243px;top:199.93px;width:59.5px;height:9.7px"><div class="st" style="left:0.00px;top:2.00px;font-size:6.43px;color:#525252;transform:scaleX(0.9100);">Smith Co</div></div>
<svg class="ic" style="left:304.20px;top:201.93px;width:5.70px;height:5.70px" viewBox="0 0 10 10"><path d="M4.2 1.3H2.3C1.7 1.3 1.3 1.7 1.3 2.3V7.7C1.3 8.3 1.7 8.7 2.3 8.7H7.7C8.3 8.7 8.7 8.3 8.7 7.7V5.8" fill="none" stroke="#999" stroke-width="1.2"/><path d="M4.6 5.4L8.4 1.6M6 1.2H8.8V4" fill="none" stroke="#999" stroke-width="1.2"/></svg>
<div class="st" style="left:316.00px;top:201.93px;font-size:6.43px;color:#525252;transform:scaleX(0.9100);">Yolando</div>
<div class="st" style="left:363.00px;top:201.93px;font-size:6.43px;color:#525252;transform:scaleX(0.9100);">Luczki</div>
<div class="st" style="left:408.80px;top:201.93px;font-size:6.92px;color:#525252;transform:scaleX(0.9100);">555-111-2222</div>
<div class="st" style="left:486.70px;top:201.93px;font-size:6.92px;color:#525252;transform:scaleX(0.9100);">555-333-4444</div>
<div class="clip" style="left:571.3px;top:199.93px;width:79.2px;height:9.7px"><div class="st" style="left:5.71px;top:2.00px;font-size:6.43px;color:#525252;transform:scaleX(0.9100);">Contact: Yolando Luczki</div><svg class="ic" style="left:69.30px;top:2.00px;width:5.70px;height:5.70px" viewBox="0 0 10 10"><path d="M4.2 1.3H2.3C1.7 1.3 1.3 1.7 1.3 2.3V7.7C1.3 8.3 1.7 8.7 2.3 8.7H7.7C8.3 8.7 8.7 8.3 8.7 7.7V5.8" fill="none" stroke="#999" stroke-width="1.2"/><path d="M4.6 5.4L8.4 1.6M6 1.2H8.8V4" fill="none" stroke="#999" stroke-width="1.2"/></svg></div>
<div class="st" style="left:659.90px;top:201.93px;font-size:6.43px;color:#525252;transform:scaleX(0.9100);">Golden</div>
<div class="st" style="left:687.80px;top:201.93px;font-size:6.43px;color:#525252;transform:scaleX(0.9100);">No</div>
<div class="hl" style="top:218.87px"></div>
<svg class="ic" style="left:233.8px;top:211.56px;width:5.8px;height:5.6px" viewBox="0 0 5.8 5.6"><rect x="0.45" y="0.45" width="4.9" height="4.7" rx="1.1" fill="#fff" stroke="#d6d6d6" stroke-width="0.9"/></svg>
<div class="clip" style="left:243px;top:209.67px;width:59.5px;height:9.7px"><div class="st" style="left:0.00px;top:2.00px;font-size:6.43px;color:#525252;transform:scaleX(0.9100);">Barfield Inc</div></div>
<svg class="ic" style="left:304.20px;top:211.67px;width:5.70px;height:5.70px" viewBox="0 0 10 10"><path d="M4.2 1.3H2.3C1.7 1.3 1.3 1.7 1.3 2.3V7.7C1.3 8.3 1.7 8.7 2.3 8.7H7.7C8.3 8.7 8.7 8.3 8.7 7.7V5.8" fill="none" stroke="#999" stroke-width="1.2"/><path d="M4.6 5.4L8.4 1.6M6 1.2H8.8V4" fill="none" stroke="#999" stroke-width="1.2"/></svg>
<div class="st" style="left:316.00px;top:211.67px;font-size:6.43px;color:#525252;transform:scaleX(0.9100);">Stephaine</div>
<div class="st" style="left:363.00px;top:211.67px;font-size:6.43px;color:#525252;transform:scaleX(0.9100);">Barfield</div>
<div class="st" style="left:408.80px;top:211.67px;font-size:6.92px;color:#525252;transform:scaleX(0.9100);">555-111-2222</div>
<div class="st" style="left:486.70px;top:211.67px;font-size:6.92px;color:#525252;transform:scaleX(0.9100);">555-333-4444</div>
<div class="clip" style="left:571.3px;top:209.67px;width:79.2px;height:9.7px"><div class="st" style="left:0.00px;top:2.00px;font-size:6.43px;color:#525252;transform:scaleX(0.9100);">Contact: Stephaine Barfield</div><svg class="ic" style="left:72.35px;top:2.00px;width:5.70px;height:5.70px" viewBox="0 0 10 10"><path d="M4.2 1.3H2.3C1.7 1.3 1.3 1.7 1.3 2.3V7.7C1.3 8.3 1.7 8.7 2.3 8.7H7.7C8.3 8.7 8.7 8.3 8.7 7.7V5.8" fill="none" stroke="#999" stroke-width="1.2"/><path d="M4.6 5.4L8.4 1.6M6 1.2H8.8V4" fill="none" stroke="#999" stroke-width="1.2"/></svg></div>
<div class="st" style="left:659.90px;top:211.67px;font-size:6.43px;color:#525252;transform:scaleX(0.9100);">Golden</div>
<div class="st" style="left:687.80px;top:211.67px;font-size:6.43px;color:#525252;transform:scaleX(0.9100);">No</div>
<div class="hl" style="top:228.60px"></div>
<svg class="ic" style="left:233.8px;top:221.30px;width:5.8px;height:5.6px" viewBox="0 0 5.8 5.6"><rect x="0.45" y="0.45" width="4.9" height="4.7" rx="1.1" fill="#fff" stroke="#d6d6d6" stroke-width="0.9"/></svg>
<div class="clip" style="left:243px;top:219.40px;width:59.5px;height:9.7px"><div class="st" style="left:0.00px;top:2.00px;font-size:6.43px;color:#525252;transform:scaleX(0.9100);">Wenner Co</div></div>
<svg class="ic" style="left:304.20px;top:221.40px;width:5.70px;height:5.70px" viewBox="0 0 10 10"><path d="M4.2 1.3H2.3C1.7 1.3 1.3 1.7 1.3 2.3V7.7C1.3 8.3 1.7 8.7 2.3 8.7H7.7C8.3 8.7 8.7 8.3 8.7 7.7V5.8" fill="none" stroke="#999" stroke-width="1.2"/><path d="M4.6 5.4L8.4 1.6M6 1.2H8.8V4" fill="none" stroke="#999" stroke-width="1.2"/></svg>
<div class="st" style="left:316.00px;top:221.40px;font-size:6.43px;color:#525252;transform:scaleX(0.9100);">Tonette</div>
<div class="st" style="left:363.00px;top:221.40px;font-size:6.43px;color:#525252;transform:scaleX(0.9100);">Wenner</div>
<div class="st" style="left:408.80px;top:221.40px;font-size:6.92px;color:#525252;transform:scaleX(0.9100);">555-111-2222</div>
<div class="st" style="left:486.70px;top:221.40px;font-size:6.92px;color:#525252;transform:scaleX(0.9100);">555-333-4444</div>
<div class="clip" style="left:571.3px;top:219.40px;width:79.2px;height:9.7px"><div class="st" style="left:3.66px;top:2.00px;font-size:6.43px;color:#525252;transform:scaleX(0.9100);">Contact: Tonette Wenner</div><svg class="ic" style="left:69.30px;top:2.00px;width:5.70px;height:5.70px" viewBox="0 0 10 10"><path d="M4.2 1.3H2.3C1.7 1.3 1.3 1.7 1.3 2.3V7.7C1.3 8.3 1.7 8.7 2.3 8.7H7.7C8.3 8.7 8.7 8.3 8.7 7.7V5.8" fill="none" stroke="#999" stroke-width="1.2"/><path d="M4.6 5.4L8.4 1.6M6 1.2H8.8V4" fill="none" stroke="#999" stroke-width="1.2"/></svg></div>
<div class="st" style="left:659.90px;top:221.40px;font-size:6.43px;color:#525252;transform:scaleX(0.9100);">Golden</div>
<div class="st" style="left:687.80px;top:221.40px;font-size:6.43px;color:#525252;transform:scaleX(0.9100);">No</div>
<div class="hl" style="top:238.33px"></div>
<svg class="ic" style="left:233.8px;top:231.03px;width:5.8px;height:5.6px" viewBox="0 0 5.8 5.6"><rect x="0.45" y="0.45" width="4.9" height="4.7" rx="1.1" fill="#fff" stroke="#d6d6d6" stroke-width="0.9"/></svg>
<div class="clip" style="left:243px;top:229.13px;width:59.5px;height:9.7px"><div class="st" style="left:0.00px;top:2.00px;font-size:6.43px;color:#525252;transform:scaleX(0.9100);">Skursky Inc</div></div>
<svg class="ic" style="left:304.20px;top:231.13px;width:5.70px;height:5.70px" viewBox="0 0 10 10"><path d="M4.2 1.3H2.3C1.7 1.3 1.3 1.7 1.3 2.3V7.7C1.3 8.3 1.7 8.7 2.3 8.7H7.7C8.3 8.7 8.7 8.3 8.7 7.7V5.8" fill="none" stroke="#999" stroke-width="1.2"/><path d="M4.6 5.4L8.4 1.6M6 1.2H8.8V4" fill="none" stroke="#999" stroke-width="1.2"/></svg>
<div class="st" style="left:316.00px;top:231.13px;font-size:6.43px;color:#525252;transform:scaleX(0.9100);">Benton</div>
<div class="st" style="left:363.00px;top:231.13px;font-size:6.43px;color:#525252;transform:scaleX(0.9100);">Skursky</div>
<div class="st" style="left:408.80px;top:231.13px;font-size:6.92px;color:#525252;transform:scaleX(0.9100);">555-111-2222</div>
<div class="st" style="left:486.70px;top:231.13px;font-size:6.92px;color:#525252;transform:scaleX(0.9100);">555-333-4444</div>
<div class="clip" style="left:571.3px;top:229.13px;width:79.2px;height:9.7px"><div class="st" style="left:3.77px;top:2.00px;font-size:6.43px;color:#525252;transform:scaleX(0.9100);">Contact: Benton Skursky</div><svg class="ic" style="left:69.30px;top:2.00px;width:5.70px;height:5.70px" viewBox="0 0 10 10"><path d="M4.2 1.3H2.3C1.7 1.3 1.3 1.7 1.3 2.3V7.7C1.3 8.3 1.7 8.7 2.3 8.7H7.7C8.3 8.7 8.7 8.3 8.7 7.7V5.8" fill="none" stroke="#999" stroke-width="1.2"/><path d="M4.6 5.4L8.4 1.6M6 1.2H8.8V4" fill="none" stroke="#999" stroke-width="1.2"/></svg></div>
<div class="st" style="left:659.90px;top:231.13px;font-size:6.43px;color:#525252;transform:scaleX(0.9100);">Golden</div>
<div class="st" style="left:687.80px;top:231.13px;font-size:6.43px;color:#525252;transform:scaleX(0.9100);">No</div>
<div class="hl" style="top:248.06px"></div>
<svg class="ic" style="left:233.8px;top:240.76px;width:5.8px;height:5.6px" viewBox="0 0 5.8 5.6"><rect x="0.45" y="0.45" width="4.9" height="4.7" rx="1.1" fill="#fff" stroke="#d6d6d6" stroke-width="0.9"/></svg>
<div class="clip" style="left:243px;top:238.86px;width:59.5px;height:9.7px"><div class="st" style="left:0.00px;top:2.00px;font-size:6.43px;color:#525252;transform:scaleX(0.9100);">Boord Co</div></div>
<svg class="ic" style="left:304.20px;top:240.86px;width:5.70px;height:5.70px" viewBox="0 0 10 10"><path d="M4.2 1.3H2.3C1.7 1.3 1.3 1.7 1.3 2.3V7.7C1.3 8.3 1.7 8.7 2.3 8.7H7.7C8.3 8.7 8.7 8.3 8.7 7.7V5.8" fill="none" stroke="#999" stroke-width="1.2"/><path d="M4.6 5.4L8.4 1.6M6 1.2H8.8V4" fill="none" stroke="#999" stroke-width="1.2"/></svg>
<div class="st" style="left:316.00px;top:240.86px;font-size:6.43px;color:#525252;transform:scaleX(0.9100);">Annabelle</div>
<div class="st" style="left:363.00px;top:240.86px;font-size:6.43px;color:#525252;transform:scaleX(0.9100);">Boord</div>
<div class="st" style="left:408.80px;top:240.86px;font-size:6.92px;color:#525252;transform:scaleX(0.9100);">555-111-2222</div>
<div class="st" style="left:486.70px;top:240.86px;font-size:6.92px;color:#525252;transform:scaleX(0.9100);">555-333-4444</div>
<div class="clip" style="left:571.3px;top:238.86px;width:79.2px;height:9.7px"><div class="st" style="left:1.81px;top:2.00px;font-size:6.43px;color:#525252;transform:scaleX(0.9100);">Contact: Annabelle Boord</div><svg class="ic" style="left:69.30px;top:2.00px;width:5.70px;height:5.70px" viewBox="0 0 10 10"><path d="M4.2 1.3H2.3C1.7 1.3 1.3 1.7 1.3 2.3V7.7C1.3 8.3 1.7 8.7 2.3 8.7H7.7C8.3 8.7 8.7 8.3 8.7 7.7V5.8" fill="none" stroke="#999" stroke-width="1.2"/><path d="M4.6 5.4L8.4 1.6M6 1.2H8.8V4" fill="none" stroke="#999" stroke-width="1.2"/></svg></div>
<div class="st" style="left:659.90px;top:240.86px;font-size:6.43px;color:#525252;transform:scaleX(0.9100);">Golden</div>
<div class="st" style="left:687.80px;top:240.86px;font-size:6.43px;color:#525252;transform:scaleX(0.9100);">No</div>
<div class="hl" style="top:257.79px"></div>
<svg class="ic" style="left:233.8px;top:250.49px;width:5.8px;height:5.6px" viewBox="0 0 5.8 5.6"><rect x="0.45" y="0.45" width="4.9" height="4.7" rx="1.1" fill="#fff" stroke="#d6d6d6" stroke-width="0.9"/></svg>
<div class="clip" style="left:243px;top:248.59px;width:59.5px;height:9.7px"><div class="st" style="left:0.00px;top:2.00px;font-size:6.43px;color:#525252;transform:scaleX(0.9100);">Venere Inc</div></div>
<svg class="ic" style="left:304.20px;top:250.59px;width:5.70px;height:5.70px" viewBox="0 0 10 10"><path d="M4.2 1.3H2.3C1.7 1.3 1.3 1.7 1.3 2.3V7.7C1.3 8.3 1.7 8.7 2.3 8.7H7.7C8.3 8.7 8.7 8.3 8.7 7.7V5.8" fill="none" stroke="#999" stroke-width="1.2"/><path d="M4.6 5.4L8.4 1.6M6 1.2H8.8V4" fill="none" stroke="#999" stroke-width="1.2"/></svg>
<div class="st" style="left:316.00px;top:250.59px;font-size:6.43px;color:#525252;transform:scaleX(0.9100);">Art</div>
<div class="st" style="left:363.00px;top:250.59px;font-size:6.43px;color:#525252;transform:scaleX(0.9100);">Venere</div>
<div class="st" style="left:408.80px;top:250.59px;font-size:6.92px;color:#525252;transform:scaleX(0.9100);">555-111-2222</div>
<div class="st" style="left:486.70px;top:250.59px;font-size:6.92px;color:#525252;transform:scaleX(0.9100);">555-333-4444</div>
<div class="clip" style="left:571.3px;top:248.59px;width:79.2px;height:9.7px"><div class="st" style="left:17.41px;top:2.00px;font-size:6.43px;color:#525252;transform:scaleX(0.9100);">Contact: Art Venere</div><svg class="ic" style="left:69.30px;top:2.00px;width:5.70px;height:5.70px" viewBox="0 0 10 10"><path d="M4.2 1.3H2.3C1.7 1.3 1.3 1.7 1.3 2.3V7.7C1.3 8.3 1.7 8.7 2.3 8.7H7.7C8.3 8.7 8.7 8.3 8.7 7.7V5.8" fill="none" stroke="#999" stroke-width="1.2"/><path d="M4.6 5.4L8.4 1.6M6 1.2H8.8V4" fill="none" stroke="#999" stroke-width="1.2"/></svg></div>
<div class="st" style="left:659.90px;top:250.59px;font-size:6.43px;color:#525252;transform:scaleX(0.9100);">Golden</div>
<div class="st" style="left:687.80px;top:250.59px;font-size:6.43px;color:#525252;transform:scaleX(0.9100);">No</div>
<div class="hl" style="top:267.52px"></div>
<svg class="ic" style="left:233.8px;top:260.22px;width:5.8px;height:5.6px" viewBox="0 0 5.8 5.6"><rect x="0.45" y="0.45" width="4.9" height="4.7" rx="1.1" fill="#fff" stroke="#d6d6d6" stroke-width="0.9"/></svg>
<div class="clip" style="left:243px;top:258.32px;width:59.5px;height:9.7px"><div class="st" style="left:0.00px;top:2.00px;font-size:6.43px;color:#525252;transform:scaleX(0.9100);">ve, Robert A Esq</div></div>
<svg class="ic" style="left:304.20px;top:260.32px;width:5.70px;height:5.70px" viewBox="0 0 10 10"><path d="M4.2 1.3H2.3C1.7 1.3 1.3 1.7 1.3 2.3V7.7C1.3 8.3 1.7 8.7 2.3 8.7H7.7C8.3 8.7 8.7 8.3 8.7 7.7V5.8" fill="none" stroke="#999" stroke-width="1.2"/><path d="M4.6 5.4L8.4 1.6M6 1.2H8.8V4" fill="none" stroke="#999" stroke-width="1.2"/></svg>
<div class="st" style="left:316.00px;top:260.32px;font-size:6.43px;color:#525252;transform:scaleX(0.9100);">Zona</div>
<div class="st" style="left:363.00px;top:260.32px;font-size:6.43px;color:#525252;transform:scaleX(0.9100);">Colla</div>
<div class="st" style="left:408.80px;top:260.32px;font-size:6.92px;color:#525252;transform:scaleX(0.9100);">203-461-1949</div>
<div class="st" style="left:486.70px;top:260.32px;font-size:6.92px;color:#525252;transform:scaleX(0.9100);">203-938-2557</div>
<div class="clip" style="left:571.3px;top:258.32px;width:79.2px;height:9.7px"><div class="st" style="left:16.44px;top:2.00px;font-size:6.43px;color:#525252;transform:scaleX(0.9100);">Contact: Zona Colla</div><svg class="ic" style="left:69.30px;top:2.00px;width:5.70px;height:5.70px" viewBox="0 0 10 10"><path d="M4.2 1.3H2.3C1.7 1.3 1.3 1.7 1.3 2.3V7.7C1.3 8.3 1.7 8.7 2.3 8.7H7.7C8.3 8.7 8.7 8.3 8.7 7.7V5.8" fill="none" stroke="#999" stroke-width="1.2"/><path d="M4.6 5.4L8.4 1.6M6 1.2H8.8V4" fill="none" stroke="#999" stroke-width="1.2"/></svg></div>
<div class="st" style="left:659.90px;top:260.32px;font-size:6.43px;color:#525252;transform:scaleX(0.9100);">Golden</div>
<div class="st" style="left:687.80px;top:260.32px;font-size:6.43px;color:#525252;transform:scaleX(0.9100);">No</div>
<div class="hl" style="top:277.25px"></div>
<svg class="ic" style="left:233.8px;top:269.95px;width:5.8px;height:5.6px" viewBox="0 0 5.8 5.6"><rect x="0.45" y="0.45" width="4.9" height="4.7" rx="1.1" fill="#fff" stroke="#d6d6d6" stroke-width="0.9"/></svg>
<div class="clip" style="left:243px;top:268.05px;width:59.5px;height:9.7px"><div class="st" style="left:-1.40px;top:2.00px;font-size:6.43px;color:#525252;transform:scaleX(0.9100);">Dill Carr & Stonbraker...</div></div>
<svg class="ic" style="left:304.20px;top:270.05px;width:5.70px;height:5.70px" viewBox="0 0 10 10"><path d="M4.2 1.3H2.3C1.7 1.3 1.3 1.7 1.3 2.3V7.7C1.3 8.3 1.7 8.7 2.3 8.7H7.7C8.3 8.7 8.7 8.3 8.7 7.7V5.8" fill="none" stroke="#999" stroke-width="1.2"/><path d="M4.6 5.4L8.4 1.6M6 1.2H8.8V4" fill="none" stroke="#999" stroke-width="1.2"/></svg>
<div class="st" style="left:316.00px;top:270.05px;font-size:6.43px;color:#525252;transform:scaleX(0.9100);">Youlanda</div>
<div class="st" style="left:363.00px;top:270.05px;font-size:6.43px;color:#525252;transform:scaleX(0.9100);">Schemmer</div>
<div class="st" style="left:408.80px;top:270.05px;font-size:6.92px;color:#525252;transform:scaleX(0.9100);">541-548-8197</div>
<div class="st" style="left:486.70px;top:270.05px;font-size:6.92px;color:#525252;transform:scaleX(0.9100);">541-993-2611</div>
<div class="clip" style="left:571.3px;top:268.05px;width:79.2px;height:9.7px"><div class="st" style="left:0.00px;top:2.00px;font-size:6.43px;color:#525252;transform:scaleX(0.9100);">Contact: Youlanda Schemmer</div><svg class="ic" style="left:78.52px;top:2.00px;width:5.70px;height:5.70px" viewBox="0 0 10 10"><path d="M4.2 1.3H2.3C1.7 1.3 1.3 1.7 1.3 2.3V7.7C1.3 8.3 1.7 8.7 2.3 8.7H7.7C8.3 8.7 8.7 8.3 8.7 7.7V5.8" fill="none" stroke="#999" stroke-width="1.2"/><path d="M4.6 5.4L8.4 1.6M6 1.2H8.8V4" fill="none" stroke="#999" stroke-width="1.2"/></svg></div>
<div class="st" style="left:659.90px;top:270.05px;font-size:6.43px;color:#525252;transform:scaleX(0.9100);">Golden</div>
<div class="st" style="left:687.80px;top:270.05px;font-size:6.43px;color:#525252;transform:scaleX(0.9100);">No</div>
<div class="hl" style="top:286.98px"></div>
<svg class="ic" style="left:233.8px;top:279.68px;width:5.8px;height:5.6px" viewBox="0 0 5.8 5.6"><rect x="0.45" y="0.45" width="4.9" height="4.7" rx="1.1" fill="#fff" stroke="#d6d6d6" stroke-width="0.9"/></svg>
<div class="clip" style="left:243px;top:277.78px;width:59.5px;height:9.7px"><div class="st" style="left:0.00px;top:2.00px;font-size:6.43px;color:#525252;transform:scaleX(0.9100);">ich Trucking</div></div>
<svg class="ic" style="left:304.20px;top:279.78px;width:5.70px;height:5.70px" viewBox="0 0 10 10"><path d="M4.2 1.3H2.3C1.7 1.3 1.3 1.7 1.3 2.3V7.7C1.3 8.3 1.7 8.7 2.3 8.7H7.7C8.3 8.7 8.7 8.3 8.7 7.7V5.8" fill="none" stroke="#999" stroke-width="1.2"/><path d="M4.6 5.4L8.4 1.6M6 1.2H8.8V4" fill="none" stroke="#999" stroke-width="1.2"/></svg>
<div class="st" style="left:316.00px;top:279.78px;font-size:6.43px;color:#525252;transform:scaleX(0.9100);">Quentin</div>
<div class="st" style="left:363.00px;top:279.78px;font-size:6.43px;color:#525252;transform:scaleX(0.9100);">Swayze</div>
<div class="st" style="left:408.80px;top:279.78px;font-size:6.92px;color:#525252;transform:scaleX(0.9100);">734-561-6170</div>
<div class="st" style="left:486.70px;top:279.78px;font-size:6.92px;color:#525252;transform:scaleX(0.9100);">734-851-8571</div>
<div class="clip" style="left:571.3px;top:277.78px;width:79.2px;height:9.7px"><div class="st" style="left:2.15px;top:2.00px;font-size:6.43px;color:#525252;transform:scaleX(0.9100);">Contact: Quentin Swayze</div><svg class="ic" style="left:69.30px;top:2.00px;width:5.70px;height:5.70px" viewBox="0 0 10 10"><path d="M4.2 1.3H2.3C1.7 1.3 1.3 1.7 1.3 2.3V7.7C1.3 8.3 1.7 8.7 2.3 8.7H7.7C8.3 8.7 8.7 8.3 8.7 7.7V5.8" fill="none" stroke="#999" stroke-width="1.2"/><path d="M4.6 5.4L8.4 1.6M6 1.2H8.8V4" fill="none" stroke="#999" stroke-width="1.2"/></svg></div>
<div class="st" style="left:659.90px;top:279.78px;font-size:6.43px;color:#525252;transform:scaleX(0.9100);">Golden</div>
<div class="st" style="left:687.80px;top:279.78px;font-size:6.43px;color:#525252;transform:scaleX(0.9100);">No</div>
<div class="hl" style="top:296.71px"></div>
<svg class="ic" style="left:233.8px;top:289.41px;width:5.8px;height:5.6px" viewBox="0 0 5.8 5.6"><rect x="0.45" y="0.45" width="4.9" height="4.7" rx="1.1" fill="#fff" stroke="#d6d6d6" stroke-width="0.9"/></svg>
<div class="clip" style="left:243px;top:287.51px;width:59.5px;height:9.7px"><div class="st" style="left:-1.20px;top:2.00px;font-size:6.43px;color:#525252;transform:scaleX(0.9100);">Charro Apartments</div></div>
<svg class="ic" style="left:304.20px;top:289.51px;width:5.70px;height:5.70px" viewBox="0 0 10 10"><path d="M4.2 1.3H2.3C1.7 1.3 1.3 1.7 1.3 2.3V7.7C1.3 8.3 1.7 8.7 2.3 8.7H7.7C8.3 8.7 8.7 8.3 8.7 7.7V5.8" fill="none" stroke="#999" stroke-width="1.2"/><path d="M4.6 5.4L8.4 1.6M6 1.2H8.8V4" fill="none" stroke="#999" stroke-width="1.2"/></svg>
<div class="st" style="left:316.00px;top:289.51px;font-size:6.43px;color:#525252;transform:scaleX(0.9100);">Larae</div>
<div class="st" style="left:363.00px;top:289.51px;font-size:6.43px;color:#525252;transform:scaleX(0.9100);">Gudroe</div>
<div class="st" style="left:408.80px;top:289.51px;font-size:6.92px;color:#525252;transform:scaleX(0.9100);">985-890-7262</div>
<div class="st" style="left:486.70px;top:289.51px;font-size:6.92px;color:#525252;transform:scaleX(0.9100);">985-261-5783</div>
<div class="clip" style="left:571.3px;top:287.51px;width:79.2px;height:9.7px"><div class="st" style="left:8.64px;top:2.00px;font-size:6.43px;color:#525252;transform:scaleX(0.9100);">Contact: Larae Gudroe</div><svg class="ic" style="left:69.30px;top:2.00px;width:5.70px;height:5.70px" viewBox="0 0 10 10"><path d="M4.2 1.3H2.3C1.7 1.3 1.3 1.7 1.3 2.3V7.7C1.3 8.3 1.7 8.7 2.3 8.7H7.7C8.3 8.7 8.7 8.3 8.7 7.7V5.8" fill="none" stroke="#999" stroke-width="1.2"/><path d="M4.6 5.4L8.4 1.6M6 1.2H8.8V4" fill="none" stroke="#999" stroke-width="1.2"/></svg></div>
<div class="st" style="left:659.90px;top:289.51px;font-size:6.43px;color:#525252;transform:scaleX(0.9100);">Golden</div>
<div class="st" style="left:687.80px;top:289.51px;font-size:6.43px;color:#525252;transform:scaleX(0.9100);">No</div>
<div class="hl" style="top:306.44px"></div>
<svg class="ic" style="left:233.8px;top:299.14px;width:5.8px;height:5.6px" viewBox="0 0 5.8 5.6"><rect x="0.45" y="0.45" width="4.9" height="4.7" rx="1.1" fill="#fff" stroke="#d6d6d6" stroke-width="0.9"/></svg>
<div class="clip" style="left:243px;top:297.24px;width:59.5px;height:9.7px"><div class="st" style="left:-1.00px;top:2.00px;font-size:6.43px;color:#525252;transform:scaleX(0.9100);">nex Martel Inc</div></div>
<svg class="ic" style="left:304.20px;top:299.24px;width:5.70px;height:5.70px" viewBox="0 0 10 10"><path d="M4.2 1.3H2.3C1.7 1.3 1.3 1.7 1.3 2.3V7.7C1.3 8.3 1.7 8.7 2.3 8.7H7.7C8.3 8.7 8.7 8.3 8.7 7.7V5.8" fill="none" stroke="#999" stroke-width="1.2"/><path d="M4.6 5.4L8.4 1.6M6 1.2H8.8V4" fill="none" stroke="#999" stroke-width="1.2"/></svg>
<div class="st" style="left:316.00px;top:299.24px;font-size:6.43px;color:#525252;transform:scaleX(0.9100);">Junita</div>
<div class="st" style="left:363.00px;top:299.24px;font-size:6.43px;color:#525252;transform:scaleX(0.9100);">Stoltzman</div>
<div class="st" style="left:408.80px;top:299.24px;font-size:6.92px;color:#525252;transform:scaleX(0.9100);">775-638-9963</div>
<div class="st" style="left:486.70px;top:299.24px;font-size:6.92px;color:#525252;transform:scaleX(0.9100);">775-578-1214</div>
<div class="clip" style="left:571.3px;top:297.24px;width:79.2px;height:9.7px"><div class="st" style="left:1.50px;top:2.00px;font-size:6.43px;color:#525252;transform:scaleX(0.9100);">Contact: Junita Stoltzman</div><svg class="ic" style="left:69.30px;top:2.00px;width:5.70px;height:5.70px" viewBox="0 0 10 10"><path d="M4.2 1.3H2.3C1.7 1.3 1.3 1.7 1.3 2.3V7.7C1.3 8.3 1.7 8.7 2.3 8.7H7.7C8.3 8.7 8.7 8.3 8.7 7.7V5.8" fill="none" stroke="#999" stroke-width="1.2"/><path d="M4.6 5.4L8.4 1.6M6 1.2H8.8V4" fill="none" stroke="#999" stroke-width="1.2"/></svg></div>
<div class="st" style="left:687.80px;top:299.24px;font-size:6.43px;color:#525252;transform:scaleX(0.9100);">No</div>
<div class="hl" style="top:316.18px"></div>
<svg class="ic" style="left:233.8px;top:308.88px;width:5.8px;height:5.6px" viewBox="0 0 5.8 5.6"><rect x="0.45" y="0.45" width="4.9" height="4.7" rx="1.1" fill="#fff" stroke="#d6d6d6" stroke-width="0.9"/></svg>
<div class="clip" style="left:243px;top:306.98px;width:59.5px;height:9.7px"><div class="st" style="left:0.00px;top:2.00px;font-size:6.43px;color:#525252;transform:scaleX(0.9100);">oni, Jean Esq</div></div>
<svg class="ic" style="left:304.20px;top:308.98px;width:5.70px;height:5.70px" viewBox="0 0 10 10"><path d="M4.2 1.3H2.3C1.7 1.3 1.3 1.7 1.3 2.3V7.7C1.3 8.3 1.7 8.7 2.3 8.7H7.7C8.3 8.7 8.7 8.3 8.7 7.7V5.8" fill="none" stroke="#999" stroke-width="1.2"/><path d="M4.6 5.4L8.4 1.6M6 1.2H8.8V4" fill="none" stroke="#999" stroke-width="1.2"/></svg>
<div class="st" style="left:316.00px;top:308.98px;font-size:6.43px;color:#525252;transform:scaleX(0.9100);">Izetta</div>
<div class="st" style="left:363.00px;top:308.98px;font-size:6.43px;color:#525252;transform:scaleX(0.9100);">Dewar</div>
<div class="st" style="left:408.80px;top:308.98px;font-size:6.92px;color:#525252;transform:scaleX(0.9100);">410-473-1708</div>
<div class="st" style="left:486.70px;top:308.98px;font-size:6.92px;color:#525252;transform:scaleX(0.9100);">410-522-7621</div>
<div class="clip" style="left:571.3px;top:306.98px;width:79.2px;height:9.7px"><div class="st" style="left:11.91px;top:2.00px;font-size:6.43px;color:#525252;transform:scaleX(0.9100);">Contact: Izetta Dewar</div><svg class="ic" style="left:69.30px;top:2.00px;width:5.70px;height:5.70px" viewBox="0 0 10 10"><path d="M4.2 1.3H2.3C1.7 1.3 1.3 1.7 1.3 2.3V7.7C1.3 8.3 1.7 8.7 2.3 8.7H7.7C8.3 8.7 8.7 8.3 8.7 7.7V5.8" fill="none" stroke="#999" stroke-width="1.2"/><path d="M4.6 5.4L8.4 1.6M6 1.2H8.8V4" fill="none" stroke="#999" stroke-width="1.2"/></svg></div>
<div class="st" style="left:687.80px;top:308.98px;font-size:6.43px;color:#525252;transform:scaleX(0.9100);">No</div>
<div class="hl" style="top:325.91px"></div>
<svg class="ic" style="left:233.8px;top:318.61px;width:5.8px;height:5.6px" viewBox="0 0 5.8 5.6"><rect x="0.45" y="0.45" width="4.9" height="4.7" rx="1.1" fill="#fff" stroke="#d6d6d6" stroke-width="0.9"/></svg>
<div class="clip" style="left:243px;top:316.71px;width:59.5px;height:9.7px"><div class="st" style="left:0.00px;top:2.00px;font-size:6.43px;color:#525252;transform:scaleX(0.9100);">ents In Free Entrprs ...</div></div>
<svg class="ic" style="left:304.20px;top:318.71px;width:5.70px;height:5.70px" viewBox="0 0 10 10"><path d="M4.2 1.3H2.3C1.7 1.3 1.3 1.7 1.3 2.3V7.7C1.3 8.3 1.7 8.7 2.3 8.7H7.7C8.3 8.7 8.7 8.3 8.7 7.7V5.8" fill="none" stroke="#999" stroke-width="1.2"/><path d="M4.6 5.4L8.4 1.6M6 1.2H8.8V4" fill="none" stroke="#999" stroke-width="1.2"/></svg>
<div class="st" style="left:316.00px;top:318.71px;font-size:6.43px;color:#525252;transform:scaleX(0.9100);">Mitsue</div>
<div class="st" style="left:363.00px;top:318.71px;font-size:6.43px;color:#525252;transform:scaleX(0.9100);">Scipione</div>
<div class="st" style="left:408.80px;top:318.71px;font-size:6.92px;color:#525252;transform:scaleX(0.9100);">530-986-9272</div>
<div class="st" style="left:486.70px;top:318.71px;font-size:6.92px;color:#525252;transform:scaleX(0.9100);">530-399-3254</div>
<div class="clip" style="left:571.3px;top:316.71px;width:79.2px;height:9.7px"><div class="st" style="left:3.45px;top:2.00px;font-size:6.43px;color:#525252;transform:scaleX(0.9100);">Contact: Mitsue Scipione</div><svg class="ic" style="left:69.30px;top:2.00px;width:5.70px;height:5.70px" viewBox="0 0 10 10"><path d="M4.2 1.3H2.3C1.7 1.3 1.3 1.7 1.3 2.3V7.7C1.3 8.3 1.7 8.7 2.3 8.7H7.7C8.3 8.7 8.7 8.3 8.7 7.7V5.8" fill="none" stroke="#999" stroke-width="1.2"/><path d="M4.6 5.4L8.4 1.6M6 1.2H8.8V4" fill="none" stroke="#999" stroke-width="1.2"/></svg></div>
<div class="st" style="left:659.90px;top:318.71px;font-size:6.43px;color:#525252;transform:scaleX(0.9100);">Golden</div>
<div class="st" style="left:687.80px;top:318.71px;font-size:6.43px;color:#525252;transform:scaleX(0.9100);">No</div>
<div class="hl" style="top:335.64px"></div>
<svg class="ic" style="left:233.8px;top:328.34px;width:5.8px;height:5.6px" viewBox="0 0 5.8 5.6"><rect x="0.45" y="0.45" width="4.9" height="4.7" rx="1.1" fill="#fff" stroke="#d6d6d6" stroke-width="0.9"/></svg>
<div class="clip" style="left:243px;top:326.44px;width:59.5px;height:9.7px"><div class="st" style="left:0.00px;top:2.00px;font-size:6.43px;color:#525252;transform:scaleX(0.9100);">ter, John J Esq</div></div>
<svg class="ic" style="left:304.20px;top:328.44px;width:5.70px;height:5.70px" viewBox="0 0 10 10"><path d="M4.2 1.3H2.3C1.7 1.3 1.3 1.7 1.3 2.3V7.7C1.3 8.3 1.7 8.7 2.3 8.7H7.7C8.3 8.7 8.7 8.3 8.7 7.7V5.8" fill="none" stroke="#999" stroke-width="1.2"/><path d="M4.6 5.4L8.4 1.6M6 1.2H8.8V4" fill="none" stroke="#999" stroke-width="1.2"/></svg>
<div class="st" style="left:316.00px;top:328.44px;font-size:6.43px;color:#525252;transform:scaleX(0.9100);">Lilli</div>
<div class="st" style="left:363.00px;top:328.44px;font-size:6.43px;color:#525252;transform:scaleX(0.9100);">Scriven</div>
<div class="st" style="left:408.80px;top:328.44px;font-size:6.92px;color:#525252;transform:scaleX(0.9100);">325-631-1560</div>
<div class="st" style="left:486.70px;top:328.44px;font-size:6.92px;color:#525252;transform:scaleX(0.9100);">325-667-7868</div>
<div class="clip" style="left:571.3px;top:326.44px;width:79.2px;height:9.7px"><div class="st" style="left:15.15px;top:2.00px;font-size:6.43px;color:#525252;transform:scaleX(0.9100);">Contact: Lilli Scriven</div><svg class="ic" style="left:69.30px;top:2.00px;width:5.70px;height:5.70px" viewBox="0 0 10 10"><path d="M4.2 1.3H2.3C1.7 1.3 1.3 1.7 1.3 2.3V7.7C1.3 8.3 1.7 8.7 2.3 8.7H7.7C8.3 8.7 8.7 8.3 8.7 7.7V5.8" fill="none" stroke="#999" stroke-width="1.2"/><path d="M4.6 5.4L8.4 1.6M6 1.2H8.8V4" fill="none" stroke="#999" stroke-width="1.2"/></svg></div>
<div class="st" style="left:659.90px;top:328.44px;font-size:6.43px;color:#525252;transform:scaleX(0.9100);">Golden</div>
<div class="st" style="left:687.80px;top:328.44px;font-size:6.43px;color:#525252;transform:scaleX(0.9100);">No</div>
<div class="hl" style="top:345.37px"></div>
<svg class="ic" style="left:233.8px;top:338.07px;width:5.8px;height:5.6px" viewBox="0 0 5.8 5.6"><rect x="0.45" y="0.45" width="4.9" height="4.7" rx="1.1" fill="#fff" stroke="#d6d6d6" stroke-width="0.9"/></svg>
<div class="clip" style="left:243px;top:336.17px;width:59.5px;height:9.7px"><div class="st" style="left:-1.00px;top:2.00px;font-size:6.43px;color:#525252;transform:scaleX(0.9100);">s, James O Esq</div></div>
<svg class="ic" style="left:304.20px;top:338.17px;width:5.70px;height:5.70px" viewBox="0 0 10 10"><path d="M4.2 1.3H2.3C1.7 1.3 1.3 1.7 1.3 2.3V7.7C1.3 8.3 1.7 8.7 2.3 8.7H7.7C8.3 8.7 8.7 8.3 8.7 7.7V5.8" fill="none" stroke="#999" stroke-width="1.2"/><path d="M4.6 5.4L8.4 1.6M6 1.2H8.8V4" fill="none" stroke="#999" stroke-width="1.2"/></svg>
<div class="st" style="left:316.00px;top:338.17px;font-size:6.43px;color:#525252;transform:scaleX(0.9100);">Cassi</div>
<div class="st" style="left:363.00px;top:338.17px;font-size:6.43px;color:#525252;transform:scaleX(0.9100);">Wildfong</div>
<div class="st" style="left:408.80px;top:338.17px;font-size:6.92px;color:#525252;transform:scaleX(0.9100);">847-633-3216</div>
<div class="st" style="left:486.70px;top:338.17px;font-size:6.92px;color:#525252;transform:scaleX(0.9100);">847-755-9041</div>
<div class="clip" style="left:571.3px;top:336.17px;width:79.2px;height:9.7px"><div class="st" style="left:5.74px;top:2.00px;font-size:6.43px;color:#525252;transform:scaleX(0.9100);">Contact: Cassi Wildfong</div><svg class="ic" style="left:69.30px;top:2.00px;width:5.70px;height:5.70px" viewBox="0 0 10 10"><path d="M4.2 1.3H2.3C1.7 1.3 1.3 1.7 1.3 2.3V7.7C1.3 8.3 1.7 8.7 2.3 8.7H7.7C8.3 8.7 8.7 8.3 8.7 7.7V5.8" fill="none" stroke="#999" stroke-width="1.2"/><path d="M4.6 5.4L8.4 1.6M6 1.2H8.8V4" fill="none" stroke="#999" stroke-width="1.2"/></svg></div>
<div class="st" style="left:659.90px;top:338.17px;font-size:6.43px;color:#525252;transform:scaleX(0.9100);">Golden</div>
<div class="st" style="left:687.80px;top:338.17px;font-size:6.43px;color:#525252;transform:scaleX(0.9100);">No</div>
<div class="hl" style="top:355.10px"></div>
<svg class="ic" style="left:233.8px;top:347.80px;width:5.8px;height:5.6px" viewBox="0 0 5.8 5.6"><rect x="0.45" y="0.45" width="4.9" height="4.7" rx="1.1" fill="#fff" stroke="#d6d6d6" stroke-width="0.9"/></svg>
<div class="clip" style="left:243px;top:345.90px;width:59.5px;height:9.7px"><div class="st" style="left:0.00px;top:2.00px;font-size:6.43px;color:#525252;transform:scaleX(0.9100);">er Bros</div></div>
<svg class="ic" style="left:304.20px;top:347.90px;width:5.70px;height:5.70px" viewBox="0 0 10 10"><path d="M4.2 1.3H2.3C1.7 1.3 1.3 1.7 1.3 2.3V7.7C1.3 8.3 1.7 8.7 2.3 8.7H7.7C8.3 8.7 8.7 8.3 8.7 7.7V5.8" fill="none" stroke="#999" stroke-width="1.2"/><path d="M4.6 5.4L8.4 1.6M6 1.2H8.8V4" fill="none" stroke="#999" stroke-width="1.2"/></svg>
<div class="st" style="left:316.00px;top:347.90px;font-size:6.43px;color:#525252;transform:scaleX(0.9100);">Kiley</div>
<div class="st" style="left:363.00px;top:347.90px;font-size:6.43px;color:#525252;transform:scaleX(0.9100);">Caldarera</div>
<div class="st" style="left:408.80px;top:347.90px;font-size:6.92px;color:#525252;transform:scaleX(0.9100);">310-498-5651</div>
<div class="st" style="left:486.70px;top:347.90px;font-size:6.92px;color:#525252;transform:scaleX(0.9100);">310-254-3084</div>
<div class="clip" style="left:571.3px;top:345.90px;width:79.2px;height:9.7px"><div class="st" style="left:4.76px;top:2.00px;font-size:6.43px;color:#525252;transform:scaleX(0.9100);">Contact: Kiley Caldarera</div><svg class="ic" style="left:69.30px;top:2.00px;width:5.70px;height:5.70px" viewBox="0 0 10 10"><path d="M4.2 1.3H2.3C1.7 1.3 1.3 1.7 1.3 2.3V7.7C1.3 8.3 1.7 8.7 2.3 8.7H7.7C8.3 8.7 8.7 8.3 8.7 7.7V5.8" fill="none" stroke="#999" stroke-width="1.2"/><path d="M4.6 5.4L8.4 1.6M6 1.2H8.8V4" fill="none" stroke="#999" stroke-width="1.2"/></svg></div>
<div class="st" style="left:659.90px;top:347.90px;font-size:6.43px;color:#525252;transform:scaleX(0.9100);">Golden</div>
<div class="st" style="left:687.80px;top:347.90px;font-size:6.43px;color:#525252;transform:scaleX(0.9100);">No</div>
<div class="hl" style="top:364.83px"></div>
<svg class="ic" style="left:233.8px;top:357.53px;width:5.8px;height:5.6px" viewBox="0 0 5.8 5.6"><rect x="0.45" y="0.45" width="4.9" height="4.7" rx="1.1" fill="#fff" stroke="#d6d6d6" stroke-width="0.9"/></svg>
<div class="clip" style="left:243px;top:355.63px;width:59.5px;height:9.7px"><div class="st" style="left:0.00px;top:2.00px;font-size:6.43px;color:#525252;transform:scaleX(0.9100);">hart Foods Inc</div></div>
<svg class="ic" style="left:304.20px;top:357.63px;width:5.70px;height:5.70px" viewBox="0 0 10 10"><path d="M4.2 1.3H2.3C1.7 1.3 1.3 1.7 1.3 2.3V7.7C1.3 8.3 1.7 8.7 2.3 8.7H7.7C8.3 8.7 8.7 8.3 8.7 7.7V5.8" fill="none" stroke="#999" stroke-width="1.2"/><path d="M4.6 5.4L8.4 1.6M6 1.2H8.8V4" fill="none" stroke="#999" stroke-width="1.2"/></svg>
<div class="st" style="left:316.00px;top:357.63px;font-size:6.43px;color:#525252;transform:scaleX(0.9100);">Justine</div>
<div class="st" style="left:363.00px;top:357.63px;font-size:6.43px;color:#525252;transform:scaleX(0.9100);">Ferrario</div>
<div class="st" style="left:408.80px;top:357.63px;font-size:6.92px;color:#525252;transform:scaleX(0.9100);">909-993-3242</div>
<div class="st" style="left:486.70px;top:357.63px;font-size:6.92px;color:#525252;transform:scaleX(0.9100);">909-631-5703</div>
<div class="clip" style="left:571.3px;top:355.63px;width:79.2px;height:9.7px"><div class="st" style="left:4.12px;top:2.00px;font-size:6.43px;color:#525252;transform:scaleX(0.9100);">Contact: Justine Ferrario</div><svg class="ic" style="left:69.30px;top:2.00px;width:5.70px;height:5.70px" viewBox="0 0 10 10"><path d="M4.2 1.3H2.3C1.7 1.3 1.3 1.7 1.3 2.3V7.7C1.3 8.3 1.7 8.7 2.3 8.7H7.7C8.3 8.7 8.7 8.3 8.7 7.7V5.8" fill="none" stroke="#999" stroke-width="1.2"/><path d="M4.6 5.4L8.4 1.6M6 1.2H8.8V4" fill="none" stroke="#999" stroke-width="1.2"/></svg></div>
<div class="st" style="left:659.90px;top:357.63px;font-size:6.43px;color:#525252;transform:scaleX(0.9100);">Golden</div>
<div class="st" style="left:687.80px;top:357.63px;font-size:6.43px;color:#525252;transform:scaleX(0.9100);">No</div>
<div class="hl" style="top:374.56px"></div>
<svg class="ic" style="left:233.8px;top:367.26px;width:5.8px;height:5.6px" viewBox="0 0 5.8 5.6"><rect x="0.45" y="0.45" width="4.9" height="4.7" rx="1.1" fill="#fff" stroke="#d6d6d6" stroke-width="0.9"/></svg>
<div class="clip" style="left:243px;top:365.36px;width:59.5px;height:9.7px"><div class="st" style="left:-1.00px;top:2.00px;font-size:6.43px;color:#525252;transform:scaleX(0.9100);">ier, James M Jr</div></div>
<svg class="ic" style="left:304.20px;top:367.36px;width:5.70px;height:5.70px" viewBox="0 0 10 10"><path d="M4.2 1.3H2.3C1.7 1.3 1.3 1.7 1.3 2.3V7.7C1.3 8.3 1.7 8.7 2.3 8.7H7.7C8.3 8.7 8.7 8.3 8.7 7.7V5.8" fill="none" stroke="#999" stroke-width="1.2"/><path d="M4.6 5.4L8.4 1.6M6 1.2H8.8V4" fill="none" stroke="#999" stroke-width="1.2"/></svg>
<div class="st" style="left:316.00px;top:367.36px;font-size:6.43px;color:#525252;transform:scaleX(0.9100);">Alpha</div>
<div class="st" style="left:363.00px;top:367.36px;font-size:6.43px;color:#525252;transform:scaleX(0.9100);">Palaia</div>
<div class="st" style="left:408.80px;top:367.36px;font-size:6.92px;color:#525252;transform:scaleX(0.9100);">856-312-2629</div>
<div class="st" style="left:486.70px;top:367.36px;font-size:6.92px;color:#525252;transform:scaleX(0.9100);">856-513-7024</div>
<div class="clip" style="left:571.3px;top:365.36px;width:79.2px;height:9.7px"><div class="st" style="left:12.22px;top:2.00px;font-size:6.43px;color:#525252;transform:scaleX(0.9100);">Contact: Alpha Palaia</div><svg class="ic" style="left:69.30px;top:2.00px;width:5.70px;height:5.70px" viewBox="0 0 10 10"><path d="M4.2 1.3H2.3C1.7 1.3 1.3 1.7 1.3 2.3V7.7C1.3 8.3 1.7 8.7 2.3 8.7H7.7C8.3 8.7 8.7 8.3 8.7 7.7V5.8" fill="none" stroke="#999" stroke-width="1.2"/><path d="M4.6 5.4L8.4 1.6M6 1.2H8.8V4" fill="none" stroke="#999" stroke-width="1.2"/></svg></div>
<div class="st" style="left:659.90px;top:367.36px;font-size:6.43px;color:#525252;transform:scaleX(0.9100);">Golden</div>
<div class="st" style="left:687.80px;top:367.36px;font-size:6.43px;color:#525252;transform:scaleX(0.9100);">No</div>
<div class="hl" style="top:384.29px"></div>
<svg class="ic" style="left:233.8px;top:376.99px;width:5.8px;height:5.6px" viewBox="0 0 5.8 5.6"><rect x="0.45" y="0.45" width="4.9" height="4.7" rx="1.1" fill="#fff" stroke="#d6d6d6" stroke-width="0.9"/></svg>
<div class="clip" style="left:243px;top:375.09px;width:59.5px;height:9.7px"><div class="st" style="left:0.00px;top:2.00px;font-size:6.43px;color:#525252;transform:scaleX(0.9100);">ows, Jon H Esq</div></div>
<svg class="ic" style="left:304.20px;top:377.09px;width:5.70px;height:5.70px" viewBox="0 0 10 10"><path d="M4.2 1.3H2.3C1.7 1.3 1.3 1.7 1.3 2.3V7.7C1.3 8.3 1.7 8.7 2.3 8.7H7.7C8.3 8.7 8.7 8.3 8.7 7.7V5.8" fill="none" stroke="#999" stroke-width="1.2"/><path d="M4.6 5.4L8.4 1.6M6 1.2H8.8V4" fill="none" stroke="#999" stroke-width="1.2"/></svg>
<div class="st" style="left:316.00px;top:377.09px;font-size:6.43px;color:#525252;transform:scaleX(0.9100);">Timothy</div>
<div class="st" style="left:363.00px;top:377.09px;font-size:6.43px;color:#525252;transform:scaleX(0.9100);">Mulqueen</div>
<div class="st" style="left:408.80px;top:377.09px;font-size:6.92px;color:#525252;transform:scaleX(0.9100);">718-332-6527</div>
<div class="st" style="left:486.70px;top:377.09px;font-size:6.92px;color:#525252;transform:scaleX(0.9100);">718-654-7063</div>
<div class="clip" style="left:571.3px;top:375.09px;width:79.2px;height:9.7px"><div class="st" style="left:0.00px;top:2.00px;font-size:6.43px;color:#525252;transform:scaleX(0.9100);">Contact: Timothy Mulqueen</div><svg class="ic" style="left:72.35px;top:2.00px;width:5.70px;height:5.70px" viewBox="0 0 10 10"><path d="M4.2 1.3H2.3C1.7 1.3 1.3 1.7 1.3 2.3V7.7C1.3 8.3 1.7 8.7 2.3 8.7H7.7C8.3 8.7 8.7 8.3 8.7 7.7V5.8" fill="none" stroke="#999" stroke-width="1.2"/><path d="M4.6 5.4L8.4 1.6M6 1.2H8.8V4" fill="none" stroke="#999" stroke-width="1.2"/></svg></div>
<div class="st" style="left:659.90px;top:377.09px;font-size:6.43px;color:#525252;transform:scaleX(0.9100);">Golden</div>
<div class="st" style="left:687.80px;top:377.09px;font-size:6.43px;color:#525252;transform:scaleX(0.9100);">No</div>
<div class="hl" style="top:394.02px"></div>
<svg class="ic" style="left:233.8px;top:386.72px;width:5.8px;height:5.6px" viewBox="0 0 5.8 5.6"><rect x="0.45" y="0.45" width="4.9" height="4.7" rx="1.1" fill="#fff" stroke="#d6d6d6" stroke-width="0.9"/></svg>
<div class="clip" style="left:243px;top:384.82px;width:59.5px;height:9.7px"><div class="st" style="left:0.00px;top:2.00px;font-size:6.43px;color:#525252;transform:scaleX(0.9100);">tec Inc</div></div>
<svg class="ic" style="left:304.20px;top:386.82px;width:5.70px;height:5.70px" viewBox="0 0 10 10"><path d="M4.2 1.3H2.3C1.7 1.3 1.3 1.7 1.3 2.3V7.7C1.3 8.3 1.7 8.7 2.3 8.7H7.7C8.3 8.7 8.7 8.3 8.7 7.7V5.8" fill="none" stroke="#999" stroke-width="1.2"/><path d="M4.6 5.4L8.4 1.6M6 1.2H8.8V4" fill="none" stroke="#999" stroke-width="1.2"/></svg>
<div class="st" style="left:316.00px;top:386.82px;font-size:6.43px;color:#525252;transform:scaleX(0.9100);">Arminda</div>
<div class="st" style="left:363.00px;top:386.82px;font-size:6.43px;color:#525252;transform:scaleX(0.9100);">Parvis</div>
<div class="st" style="left:408.80px;top:386.82px;font-size:6.92px;color:#525252;transform:scaleX(0.9100);">602-906-9419</div>
<div class="st" style="left:486.70px;top:386.82px;font-size:6.92px;color:#525252;transform:scaleX(0.9100);">602-277-3025</div>
<div class="clip" style="left:571.3px;top:384.82px;width:79.2px;height:9.7px"><div class="st" style="left:5.41px;top:2.00px;font-size:6.43px;color:#525252;transform:scaleX(0.9100);">Contact: Arminda Parvis</div><svg class="ic" style="left:69.30px;top:2.00px;width:5.70px;height:5.70px" viewBox="0 0 10 10"><path d="M4.2 1.3H2.3C1.7 1.3 1.3 1.7 1.3 2.3V7.7C1.3 8.3 1.7 8.7 2.3 8.7H7.7C8.3 8.7 8.7 8.3 8.7 7.7V5.8" fill="none" stroke="#999" stroke-width="1.2"/><path d="M4.6 5.4L8.4 1.6M6 1.2H8.8V4" fill="none" stroke="#999" stroke-width="1.2"/></svg></div>
<div class="st" style="left:659.90px;top:386.82px;font-size:6.43px;color:#525252;transform:scaleX(0.9100);">Golden</div>
<div class="st" style="left:687.80px;top:386.82px;font-size:6.43px;color:#525252;transform:scaleX(0.9100);">No</div>
<div class="hl" style="top:403.75px"></div>
<svg class="ic" style="left:233.8px;top:396.45px;width:5.8px;height:5.6px" viewBox="0 0 5.8 5.6"><rect x="0.45" y="0.45" width="4.9" height="4.7" rx="1.1" fill="#fff" stroke="#d6d6d6" stroke-width="0.9"/></svg>
<div class="clip" style="left:243px;top:394.55px;width:59.5px;height:9.7px"><div class="st" style="left:0.00px;top:2.00px;font-size:6.43px;color:#525252;transform:scaleX(0.9100);">st Fire Laboratory</div></div>
<svg class="ic" style="left:304.20px;top:396.55px;width:5.70px;height:5.70px" viewBox="0 0 10 10"><path d="M4.2 1.3H2.3C1.7 1.3 1.3 1.7 1.3 2.3V7.7C1.3 8.3 1.7 8.7 2.3 8.7H7.7C8.3 8.7 8.7 8.3 8.7 7.7V5.8" fill="none" stroke="#999" stroke-width="1.2"/><path d="M4.6 5.4L8.4 1.6M6 1.2H8.8V4" fill="none" stroke="#999" stroke-width="1.2"/></svg>
<div class="st" style="left:316.00px;top:396.55px;font-size:6.43px;color:#525252;transform:scaleX(0.9100);">Luisa</div>
<div class="st" style="left:363.00px;top:396.55px;font-size:6.43px;color:#525252;transform:scaleX(0.9100);">Jurney</div>
<div class="st" style="left:408.80px;top:396.55px;font-size:6.92px;color:#525252;transform:scaleX(0.9100);">617-365-2134</div>
<div class="st" style="left:486.70px;top:396.55px;font-size:6.92px;color:#525252;transform:scaleX(0.9100);">617-544-2541</div>
<div class="clip" style="left:571.3px;top:394.55px;width:79.2px;height:9.7px"><div class="st" style="left:11.57px;top:2.00px;font-size:6.43px;color:#525252;transform:scaleX(0.9100);">Contact: Luisa Jurney</div><svg class="ic" style="left:69.30px;top:2.00px;width:5.70px;height:5.70px" viewBox="0 0 10 10"><path d="M4.2 1.3H2.3C1.7 1.3 1.3 1.7 1.3 2.3V7.7C1.3 8.3 1.7 8.7 2.3 8.7H7.7C8.3 8.7 8.7 8.3 8.7 7.7V5.8" fill="none" stroke="#999" stroke-width="1.2"/><path d="M4.6 5.4L8.4 1.6M6 1.2H8.8V4" fill="none" stroke="#999" stroke-width="1.2"/></svg></div>
<div class="st" style="left:659.90px;top:396.55px;font-size:6.43px;color:#525252;transform:scaleX(0.9100);">Golden</div>
<div class="st" style="left:687.80px;top:396.55px;font-size:6.43px;color:#525252;transform:scaleX(0.9100);">No</div>
<div class="hl" style="top:413.49px"></div>
<svg class="ic" style="left:233.8px;top:406.19px;width:5.8px;height:5.6px" viewBox="0 0 5.8 5.6"><rect x="0.45" y="0.45" width="4.9" height="4.7" rx="1.1" fill="#fff" stroke="#d6d6d6" stroke-width="0.9"/></svg>
<div class="clip" style="left:243px;top:404.29px;width:59.5px;height:9.7px"><div class="st" style="left:-1.40px;top:2.00px;font-size:6.43px;color:#525252;transform:scaleX(0.9100);">do Iv Care</div></div>
<svg class="ic" style="left:304.20px;top:406.29px;width:5.70px;height:5.70px" viewBox="0 0 10 10"><path d="M4.2 1.3H2.3C1.7 1.3 1.3 1.7 1.3 2.3V7.7C1.3 8.3 1.7 8.7 2.3 8.7H7.7C8.3 8.7 8.7 8.3 8.7 7.7V5.8" fill="none" stroke="#999" stroke-width="1.2"/><path d="M4.6 5.4L8.4 1.6M6 1.2H8.8V4" fill="none" stroke="#999" stroke-width="1.2"/></svg>
<div class="st" style="left:316.00px;top:406.29px;font-size:6.43px;color:#525252;transform:scaleX(0.9100);">Izetta</div>
<div class="st" style="left:363.00px;top:406.29px;font-size:6.43px;color:#525252;transform:scaleX(0.9100);">Funnell</div>
<div class="st" style="left:408.80px;top:406.29px;font-size:6.92px;color:#525252;transform:scaleX(0.9100);">770-844-3447</div>
<div class="st" style="left:486.70px;top:406.29px;font-size:6.92px;color:#525252;transform:scaleX(0.9100);">770-584-4119</div>
<div class="clip" style="left:571.3px;top:404.29px;width:79.2px;height:9.7px"><div class="st" style="left:11.91px;top:2.00px;font-size:6.43px;color:#525252;transform:scaleX(0.9100);">Contact: Izetta Dewar</div><svg class="ic" style="left:69.30px;top:2.00px;width:5.70px;height:5.70px" viewBox="0 0 10 10"><path d="M4.2 1.3H2.3C1.7 1.3 1.3 1.7 1.3 2.3V7.7C1.3 8.3 1.7 8.7 2.3 8.7H7.7C8.3 8.7 8.7 8.3 8.7 7.7V5.8" fill="none" stroke="#999" stroke-width="1.2"/><path d="M4.6 5.4L8.4 1.6M6 1.2H8.8V4" fill="none" stroke="#999" stroke-width="1.2"/></svg></div>
<div class="st" style="left:687.80px;top:406.29px;font-size:6.43px;color:#525252;transform:scaleX(0.9100);">No</div>
<div class="hl" style="top:423.22px"></div>
<svg class="ic" style="left:233.8px;top:415.92px;width:5.8px;height:5.6px" viewBox="0 0 5.8 5.6"><rect x="0.45" y="0.45" width="4.9" height="4.7" rx="1.1" fill="#fff" stroke="#d6d6d6" stroke-width="0.9"/></svg>
<div class="clip" style="left:243px;top:414.02px;width:59.5px;height:9.7px"><div class="st" style="left:2.00px;top:2.00px;font-size:6.43px;color:#525252;transform:scaleX(0.9100);">Deanna</div></div>
<svg class="ic" style="left:304.20px;top:416.02px;width:5.70px;height:5.70px" viewBox="0 0 10 10"><path d="M4.2 1.3H2.3C1.7 1.3 1.3 1.7 1.3 2.3V7.7C1.3 8.3 1.7 8.7 2.3 8.7H7.7C8.3 8.7 8.7 8.3 8.7 7.7V5.8" fill="none" stroke="#999" stroke-width="1.2"/><path d="M4.6 5.4L8.4 1.6M6 1.2H8.8V4" fill="none" stroke="#999" stroke-width="1.2"/></svg>
<div class="st" style="left:316.00px;top:416.02px;font-size:6.43px;color:#525252;transform:scaleX(0.9100);">Elouise</div>
<div class="st" style="left:363.00px;top:416.02px;font-size:6.43px;color:#525252;transform:scaleX(0.9100);">Gwalthney</div>
<div class="st" style="left:408.80px;top:416.02px;font-size:6.92px;color:#525252;transform:scaleX(0.9100);">301-841-5012</div>
<div class="st" style="left:486.70px;top:416.02px;font-size:6.92px;color:#525252;transform:scaleX(0.9100);">301-591-3034</div>
<div class="clip" style="left:571.3px;top:414.02px;width:79.2px;height:9.7px"><div class="st" style="left:0.00px;top:2.00px;font-size:6.43px;color:#525252;transform:scaleX(0.9100);">Contact: Elouise Gwalthney</div><svg class="ic" style="left:72.99px;top:2.00px;width:5.70px;height:5.70px" viewBox="0 0 10 10"><path d="M4.2 1.3H2.3C1.7 1.3 1.3 1.7 1.3 2.3V7.7C1.3 8.3 1.7 8.7 2.3 8.7H7.7C8.3 8.7 8.7 8.3 8.7 7.7V5.8" fill="none" stroke="#999" stroke-width="1.2"/><path d="M4.6 5.4L8.4 1.6M6 1.2H8.8V4" fill="none" stroke="#999" stroke-width="1.2"/></svg></div>
<div class="st" style="left:659.90px;top:416.02px;font-size:6.43px;color:#525252;transform:scaleX(0.9100);">Golden</div>
<div class="st" style="left:687.80px;top:416.02px;font-size:6.43px;color:#525252;transform:scaleX(0.9100);">No</div>
<div class="hl" style="top:432.95px"></div>
<svg class="ic" style="left:233.8px;top:425.65px;width:5.8px;height:5.6px" viewBox="0 0 5.8 5.6"><rect x="0.45" y="0.45" width="4.9" height="4.7" rx="1.1" fill="#fff" stroke="#d6d6d6" stroke-width="0.9"/></svg>
<div class="clip" style="left:243px;top:423.75px;width:59.5px;height:9.7px"><div class="st" style="left:0.00px;top:2.00px;font-size:6.43px;color:#525252;transform:scaleX(0.9100);">veras Prospect</div></div>
<svg class="ic" style="left:304.20px;top:425.75px;width:5.70px;height:5.70px" viewBox="0 0 10 10"><path d="M4.2 1.3H2.3C1.7 1.3 1.3 1.7 1.3 2.3V7.7C1.3 8.3 1.7 8.7 2.3 8.7H7.7C8.3 8.7 8.7 8.3 8.7 7.7V5.8" fill="none" stroke="#999" stroke-width="1.2"/><path d="M4.6 5.4L8.4 1.6M6 1.2H8.8V4" fill="none" stroke="#999" stroke-width="1.2"/></svg>
<div class="st" style="left:316.00px;top:425.75px;font-size:6.43px;color:#525252;transform:scaleX(0.9100);">Golda</div>
<div class="st" style="left:363.00px;top:425.75px;font-size:6.43px;color:#525252;transform:scaleX(0.9100);">Kaniecki</div>
<div class="st" style="left:408.80px;top:425.75px;font-size:6.92px;color:#525252;transform:scaleX(0.9100);">732-628-9909</div>
<div class="st" style="left:486.70px;top:425.75px;font-size:6.92px;color:#525252;transform:scaleX(0.9100);">732-617-5310</div>
<div class="clip" style="left:571.3px;top:423.75px;width:79.2px;height:9.7px"><div class="st" style="left:5.40px;top:2.00px;font-size:6.43px;color:#525252;transform:scaleX(0.9100);">Contact: Golda Kaniecki</div><svg class="ic" style="left:69.30px;top:2.00px;width:5.70px;height:5.70px" viewBox="0 0 10 10"><path d="M4.2 1.3H2.3C1.7 1.3 1.3 1.7 1.3 2.3V7.7C1.3 8.3 1.7 8.7 2.3 8.7H7.7C8.3 8.7 8.7 8.3 8.7 7.7V5.8" fill="none" stroke="#999" stroke-width="1.2"/><path d="M4.6 5.4L8.4 1.6M6 1.2H8.8V4" fill="none" stroke="#999" stroke-width="1.2"/></svg></div>
<div class="st" style="left:659.90px;top:425.75px;font-size:6.43px;color:#525252;transform:scaleX(0.9100);">Golden</div>
<div class="st" style="left:687.80px;top:425.75px;font-size:6.43px;color:#525252;transform:scaleX(0.9100);">No</div>
<div class="hl" style="top:442.68px"></div>
<svg class="ic" style="left:233.8px;top:435.38px;width:5.8px;height:5.6px" viewBox="0 0 5.8 5.6"><rect x="0.45" y="0.45" width="4.9" height="4.7" rx="1.1" fill="#fff" stroke="#d6d6d6" stroke-width="0.9"/></svg>
<div class="clip" style="left:243px;top:433.48px;width:59.5px;height:9.7px"><div class="st" style="left:-0.50px;top:2.00px;font-size:6.43px;color:#525252;transform:scaleX(0.9100);">otani, Grace T</div></div>
<svg class="ic" style="left:304.20px;top:435.48px;width:5.70px;height:5.70px" viewBox="0 0 10 10"><path d="M4.2 1.3H2.3C1.7 1.3 1.3 1.7 1.3 2.3V7.7C1.3 8.3 1.7 8.7 2.3 8.7H7.7C8.3 8.7 8.7 8.3 8.7 7.7V5.8" fill="none" stroke="#999" stroke-width="1.2"/><path d="M4.6 5.4L8.4 1.6M6 1.2H8.8V4" fill="none" stroke="#999" stroke-width="1.2"/></svg>
<div class="st" style="left:316.00px;top:435.48px;font-size:6.43px;color:#525252;transform:scaleX(0.9100);">Nan</div>
<div class="st" style="left:363.00px;top:435.48px;font-size:6.43px;color:#525252;transform:scaleX(0.9100);">Koppinger</div>
<div class="st" style="left:408.80px;top:435.48px;font-size:6.92px;color:#525252;transform:scaleX(0.9100);">336-370-5333</div>
<div class="st" style="left:486.70px;top:435.48px;font-size:6.92px;color:#525252;transform:scaleX(0.9100);">336-564-1492</div>
<div class="clip" style="left:571.3px;top:433.48px;width:79.2px;height:9.7px"><div class="st" style="left:5.72px;top:2.00px;font-size:6.43px;color:#525252;transform:scaleX(0.9100);">Contact: Nan Koppinger</div><svg class="ic" style="left:69.30px;top:2.00px;width:5.70px;height:5.70px" viewBox="0 0 10 10"><path d="M4.2 1.3H2.3C1.7 1.3 1.3 1.7 1.3 2.3V7.7C1.3 8.3 1.7 8.7 2.3 8.7H7.7C8.3 8.7 8.7 8.3 8.7 7.7V5.8" fill="none" stroke="#999" stroke-width="1.2"/><path d="M4.6 5.4L8.4 1.6M6 1.2H8.8V4" fill="none" stroke="#999" stroke-width="1.2"/></svg></div>
<div class="st" style="left:659.90px;top:435.48px;font-size:6.43px;color:#525252;transform:scaleX(0.9100);">Golden</div>
<div class="st" style="left:687.80px;top:435.48px;font-size:6.43px;color:#525252;transform:scaleX(0.9100);">No</div>
<div class="hl" style="top:452.41px"></div>
<svg class="ic" style="left:233.8px;top:445.11px;width:5.8px;height:5.6px" viewBox="0 0 5.8 5.6"><rect x="0.45" y="0.45" width="4.9" height="4.7" rx="1.1" fill="#fff" stroke="#d6d6d6" stroke-width="0.9"/></svg>
<div class="clip" style="left:243px;top:443.21px;width:59.5px;height:9.7px"><div class="st" style="left:0.00px;top:2.00px;font-size:6.43px;color:#525252;transform:scaleX(0.9100);">nsteel</div></div>
<svg class="ic" style="left:304.20px;top:445.21px;width:5.70px;height:5.70px" viewBox="0 0 10 10"><path d="M4.2 1.3H2.3C1.7 1.3 1.3 1.7 1.3 2.3V7.7C1.3 8.3 1.7 8.7 2.3 8.7H7.7C8.3 8.7 8.7 8.3 8.7 7.7V5.8" fill="none" stroke="#999" stroke-width="1.2"/><path d="M4.6 5.4L8.4 1.6M6 1.2H8.8V4" fill="none" stroke="#999" stroke-width="1.2"/></svg>
<div class="st" style="left:316.00px;top:445.21px;font-size:6.43px;color:#525252;transform:scaleX(0.9100);">Cristy</div>
<div class="st" style="left:363.00px;top:445.21px;font-size:6.43px;color:#525252;transform:scaleX(0.9100);">Lother</div>
<div class="st" style="left:408.80px;top:445.21px;font-size:6.92px;color:#525252;transform:scaleX(0.9100);">760-971-4322</div>
<div class="st" style="left:486.70px;top:445.21px;font-size:6.92px;color:#525252;transform:scaleX(0.9100);">760-465-4762</div>
<div class="clip" style="left:571.3px;top:443.21px;width:79.2px;height:9.7px"><div class="st" style="left:11.58px;top:2.00px;font-size:6.43px;color:#525252;transform:scaleX(0.9100);">Contact: Cristy Lother</div><svg class="ic" style="left:69.30px;top:2.00px;width:5.70px;height:5.70px" viewBox="0 0 10 10"><path d="M4.2 1.3H2.3C1.7 1.3 1.3 1.7 1.3 2.3V7.7C1.3 8.3 1.7 8.7 2.3 8.7H7.7C8.3 8.7 8.7 8.3 8.7 7.7V5.8" fill="none" stroke="#999" stroke-width="1.2"/><path d="M4.6 5.4L8.4 1.6M6 1.2H8.8V4" fill="none" stroke="#999" stroke-width="1.2"/></svg></div>
<div class="st" style="left:659.90px;top:445.21px;font-size:6.43px;color:#525252;transform:scaleX(0.9100);">Golden</div>
<div class="st" style="left:687.80px;top:445.21px;font-size:6.43px;color:#525252;transform:scaleX(0.9100);">No</div>
<div class="hl" style="top:462.14px"></div>
<svg class="ic" style="left:233.8px;top:454.84px;width:5.8px;height:5.6px" viewBox="0 0 5.8 5.6"><rect x="0.45" y="0.45" width="4.9" height="4.7" rx="1.1" fill="#fff" stroke="#d6d6d6" stroke-width="0.9"/></svg>
<div class="clip" style="left:243px;top:452.94px;width:59.5px;height:9.7px"><div class="st" style="left:0.00px;top:2.00px;font-size:6.43px;color:#525252;transform:scaleX(0.9100);">son Millwork Co</div></div>
<svg class="ic" style="left:304.20px;top:454.94px;width:5.70px;height:5.70px" viewBox="0 0 10 10"><path d="M4.2 1.3H2.3C1.7 1.3 1.3 1.7 1.3 2.3V7.7C1.3 8.3 1.7 8.7 2.3 8.7H7.7C8.3 8.7 8.7 8.3 8.7 7.7V5.8" fill="none" stroke="#999" stroke-width="1.2"/><path d="M4.6 5.4L8.4 1.6M6 1.2H8.8V4" fill="none" stroke="#999" stroke-width="1.2"/></svg>
<div class="st" style="left:316.00px;top:454.94px;font-size:6.43px;color:#525252;transform:scaleX(0.9100);">Ettie</div>
<div class="st" style="left:363.00px;top:454.94px;font-size:6.43px;color:#525252;transform:scaleX(0.9100);">Hoopengardner</div>
<div class="st" style="left:408.80px;top:454.94px;font-size:6.92px;color:#525252;transform:scaleX(0.9100);">509-755-5393</div>
<div class="st" style="left:486.70px;top:454.94px;font-size:6.92px;color:#525252;transform:scaleX(0.9100);">509-847-3352</div>
<div class="clip" style="left:571.3px;top:452.94px;width:79.2px;height:9.7px"><div class="st" style="left:0.00px;top:2.00px;font-size:6.43px;color:#525252;transform:scaleX(0.9100);">Contact: Ettie Hoopengardner</div><svg class="ic" style="left:78.52px;top:2.00px;width:5.70px;height:5.70px" viewBox="0 0 10 10"><path d="M4.2 1.3H2.3C1.7 1.3 1.3 1.7 1.3 2.3V7.7C1.3 8.3 1.7 8.7 2.3 8.7H7.7C8.3 8.7 8.7 8.3 8.7 7.7V5.8" fill="none" stroke="#999" stroke-width="1.2"/><path d="M4.6 5.4L8.4 1.6M6 1.2H8.8V4" fill="none" stroke="#999" stroke-width="1.2"/></svg></div>
<div class="st" style="left:659.90px;top:454.94px;font-size:6.43px;color:#525252;transform:scaleX(0.9100);">Golden</div>
<div class="st" style="left:687.80px;top:454.94px;font-size:6.43px;color:#525252;transform:scaleX(0.9100);">No</div>

<div class="abs" style="left:735.8px;top:73.4px;width:7px;height:389.4px;background:#f1f1f1"></div>
<div class="abs" style="left:736.4px;top:81.1px;width:5.4px;height:298.6px;background:#c1c1c1"></div>
<svg class="ic" style="left:737.60px;top:76.60px;width:3.00px;height:1.60px" viewBox="0 0 3.00 1.60"><path d="M0 1.60L1.50 0L3.00 1.60Z" fill="#555"/></svg>
<svg class="ic" style="left:737.60px;top:458.40px;width:3.00px;height:1.60px" viewBox="0 0 3.00 1.60"><path d="M0 0L3.00 0L1.50 1.60Z" fill="#333"/></svg>
<div class="abs" style="left:243.3px;top:462.8px;width:492.5px;height:7.4px;background:#f1f1f1"></div>
<div class="abs" style="left:324px;top:463.4px;width:404px;height:5.8px;background:#c1c1c1"></div>
<svg class="ic" style="left:246.2px;top:464.8px;width:1.6px;height:3px" viewBox="0 0 1.6 3"><path d="M1.6 0L0 1.5L1.6 3Z" fill="#555"/></svg>
<svg class="ic" style="left:731.3px;top:464.8px;width:1.6px;height:3px" viewBox="0 0 1.6 3"><path d="M0 0L1.6 1.5L0 3Z" fill="#aaa"/></svg>
<div class="abs" style="left:735.8px;top:462.8px;width:7px;height:7.4px;background:#ececec"></div>

<svg class="ic" style="left:641.6px;top:75.4px;width:8.6px;height:11.2px" viewBox="0 0 16 21"><path d="M5.6 12.6V2.4C5.6 0.9 7.9 0.9 7.9 2.4V8.6C7.9 7.4 10.3 7.4 10.3 8.6V9.4C10.3 8.2 12.7 8.2 12.7 9.4V10.2C12.7 9.1 15.1 9.1 15.1 10.2V15.4C15.1 18.6 13.3 20.9 10.6 20.9H8.6C6.8 20.9 5.9 20.1 4.8 18.8L1.3 14.6C0.3 13.4 1.8 11.8 3.2 12.8L5.6 14.6Z" fill="#fff" stroke="#151515" stroke-width="1.5" stroke-linejoin="round"/><path d="M7.9 8.6V12.6M10.3 9.4V12.6M12.7 10.2V12.6" stroke="#151515" stroke-width="1.1"/></svg>

<svg class="ic" style="left:0;top:0;width:754px;height:481px" viewBox="0 0 754 481">
<defs><filter id="sh" x="-10%" y="-20%" width="130%" height="150%"><feGaussianBlur in="SourceAlpha" stdDeviation="2.6"/><feOffset dx="2.5" dy="3.2"/><feComponentTransfer><feFuncA type="linear" slope="0.5"/></feComponentTransfer><feMerge><feMergeNode/><feMergeNode in="SourceGraphic"/></feMerge></filter></defs>
<path filter="url(#sh)" d="M210 95.5H572.5L652 70.8L608.5 95.5H614.5C623.5 95.5 630 102 630 111V245C630 254 623.5 260.1 614.5 260.1H210C201 260.1 194.9 254 194.9 245V111.3C194.9 102.3 201 95.5 210 95.5Z" fill="#fff"/>
<path d="M210 95.5H572.5M608.5 95.5H614.5C623.5 95.5 630 102 630 111V245C630 254 623.5 260.1 614.5 260.1H210C201 260.1 194.75 254 194.75 245V111.3C194.75 102.3 201 95.5 210 95.5" fill="none" stroke="#0000ff" stroke-width="1.8"/>
<path d="M572.5 95.5L652 70.8L608.5 95.5" fill="none" stroke="#0000ff" stroke-width="1"/>
</svg>

<div class="abs" style="left:212px;top:112.8px;width:395.2px;height:124.8px;background:#fff;box-shadow:0 1.5px 5px rgba(0,0,0,0.28)"></div>
<div class="abs" style="left:212px;top:142.8px;width:395.2px;height:1px;background:#dcdcdc"></div>
<div class="abs" style="left:212px;top:165.9px;width:395.2px;height:1px;background:#dcdcdc"></div>
<div class="abs" style="left:212px;top:189.0px;width:395.2px;height:1px;background:#dcdcdc"></div>
<div class="abs" style="left:212px;top:212.3px;width:395.2px;height:1px;background:#dcdcdc"></div>
<div class="abs" style="left:212px;top:235.5px;width:395.2px;height:1px;background:#dcdcdc"></div>
<div class="abs" style="left:411.8px;top:143.3px;width:1px;height:92.7px;background:#ededed"></div>
<div class="abs" style="left:486.3px;top:143.3px;width:1px;height:92.7px;background:#ededed"></div>
<div class="st" style="left:223.40px;top:120.80px;font-size:13.45px;color:#8c8c8c;">Group</div>
<div class="st" style="left:423.30px;top:120.80px;font-size:13.45px;color:#8c8c8c;">State</div>
<div class="st" style="left:498.30px;top:120.80px;font-size:13.45px;color:#8c8c8c;letter-spacing:0.24px">Auto created</div>
<div class="abs" style="left:384.6px;top:145.8px;width:16.6px;height:16.6px;border-radius:50%;background:#ebebeb"></div>
<div class="st" style="left:239.20px;top:147.80px;font-size:13.45px;color:#2e2e3a;">Contact: Janine Rhoden</div>
<div class="clip" style="left:212px;top:166.4px;width:196px;height:23px"><div class="st" style="left:11.40px;top:4.50px;font-size:13.45px;color:#2e2e3a;">Contact: Dominque Dickerson</div></div>
<div class="st" style="left:246.80px;top:194.00px;font-size:13.45px;color:#2e2e3a;">Contact: Krissy Rauser</div>
<div class="st" style="left:223.40px;top:217.10px;font-size:13.45px;color:#2e2e3a;">Contact: Samira Heintzman</div>
<svg class="ic" style="left:387.20px;top:148.40px;width:12.00px;height:12.00px" viewBox="0 0 10 10"><path d="M4.2 1.3H2.3C1.7 1.3 1.3 1.7 1.3 2.3V7.7C1.3 8.3 1.7 8.7 2.3 8.7H7.7C8.3 8.7 8.7 8.3 8.7 7.7V5.8" fill="none" stroke="#777" stroke-width="1.0"/><path d="M4.6 5.4L8.4 1.6M6 1.2H8.8V4" fill="none" stroke="#777" stroke-width="1.0"/></svg>
<svg class="ic" style="left:387.20px;top:194.60px;width:12.00px;height:12.00px" viewBox="0 0 10 10"><path d="M4.2 1.3H2.3C1.7 1.3 1.3 1.7 1.3 2.3V7.7C1.3 8.3 1.7 8.7 2.3 8.7H7.7C8.3 8.7 8.7 8.3 8.7 7.7V5.8" fill="none" stroke="#777" stroke-width="1.0"/><path d="M4.6 5.4L8.4 1.6M6 1.2H8.8V4" fill="none" stroke="#777" stroke-width="1.0"/></svg>
<svg class="ic" style="left:393.30px;top:217.70px;width:12.00px;height:12.00px" viewBox="0 0 10 10"><path d="M4.2 1.3H2.3C1.7 1.3 1.3 1.7 1.3 2.3V7.7C1.3 8.3 1.7 8.7 2.3 8.7H7.7C8.3 8.7 8.7 8.3 8.7 7.7V5.8" fill="none" stroke="#777" stroke-width="1.0"/><path d="M4.6 5.4L8.4 1.6M6 1.2H8.8V4" fill="none" stroke="#777" stroke-width="1.0"/></svg>
<div class="st" style="left:432.90px;top:147.80px;font-size:13.45px;color:#2e2e3a;">Golden</div>
<div class="st" style="left:432.90px;top:170.90px;font-size:13.45px;color:#2e2e3a;">Golden</div>
<div class="st" style="left:432.90px;top:194.00px;font-size:13.45px;color:#2e2e3a;">Golden</div>
<div class="st" style="left:432.90px;top:217.10px;font-size:13.45px;color:#2e2e3a;">Golden</div>
<div class="st" style="left:498.30px;top:147.80px;font-size:13.45px;color:#2e2e3a;">No</div>
<div class="st" style="left:498.30px;top:170.90px;font-size:13.45px;color:#2e2e3a;">No</div>
<div class="st" style="left:498.30px;top:194.00px;font-size:13.45px;color:#2e2e3a;">No</div>
<div class="st" style="left:498.30px;top:217.10px;font-size:13.45px;color:#2e2e3a;">No</div>

<svg class="ic" style="left:390.4px;top:154.3px;width:18.4px;height:23.6px" viewBox="0 0 16 21"><path d="M5.6 12.6V2.4C5.6 0.9 7.9 0.9 7.9 2.4V8.6C7.9 7.4 10.3 7.4 10.3 8.6V9.4C10.3 8.2 12.7 8.2 12.7 9.4V10.2C12.7 9.1 15.1 9.1 15.1 10.2V15.4C15.1 18.6 13.3 20.9 10.6 20.9H8.6C6.8 20.9 5.9 20.1 4.8 18.8L1.3 14.6C0.3 13.4 1.8 11.8 3.2 12.8L5.6 14.6Z" fill="#fff" stroke="#151515" stroke-width="1.5" stroke-linejoin="round"/><path d="M7.9 8.6V12.6M10.3 9.4V12.6M12.7 10.2V12.6" stroke="#151515" stroke-width="1.1"/></svg>
</body></html>
